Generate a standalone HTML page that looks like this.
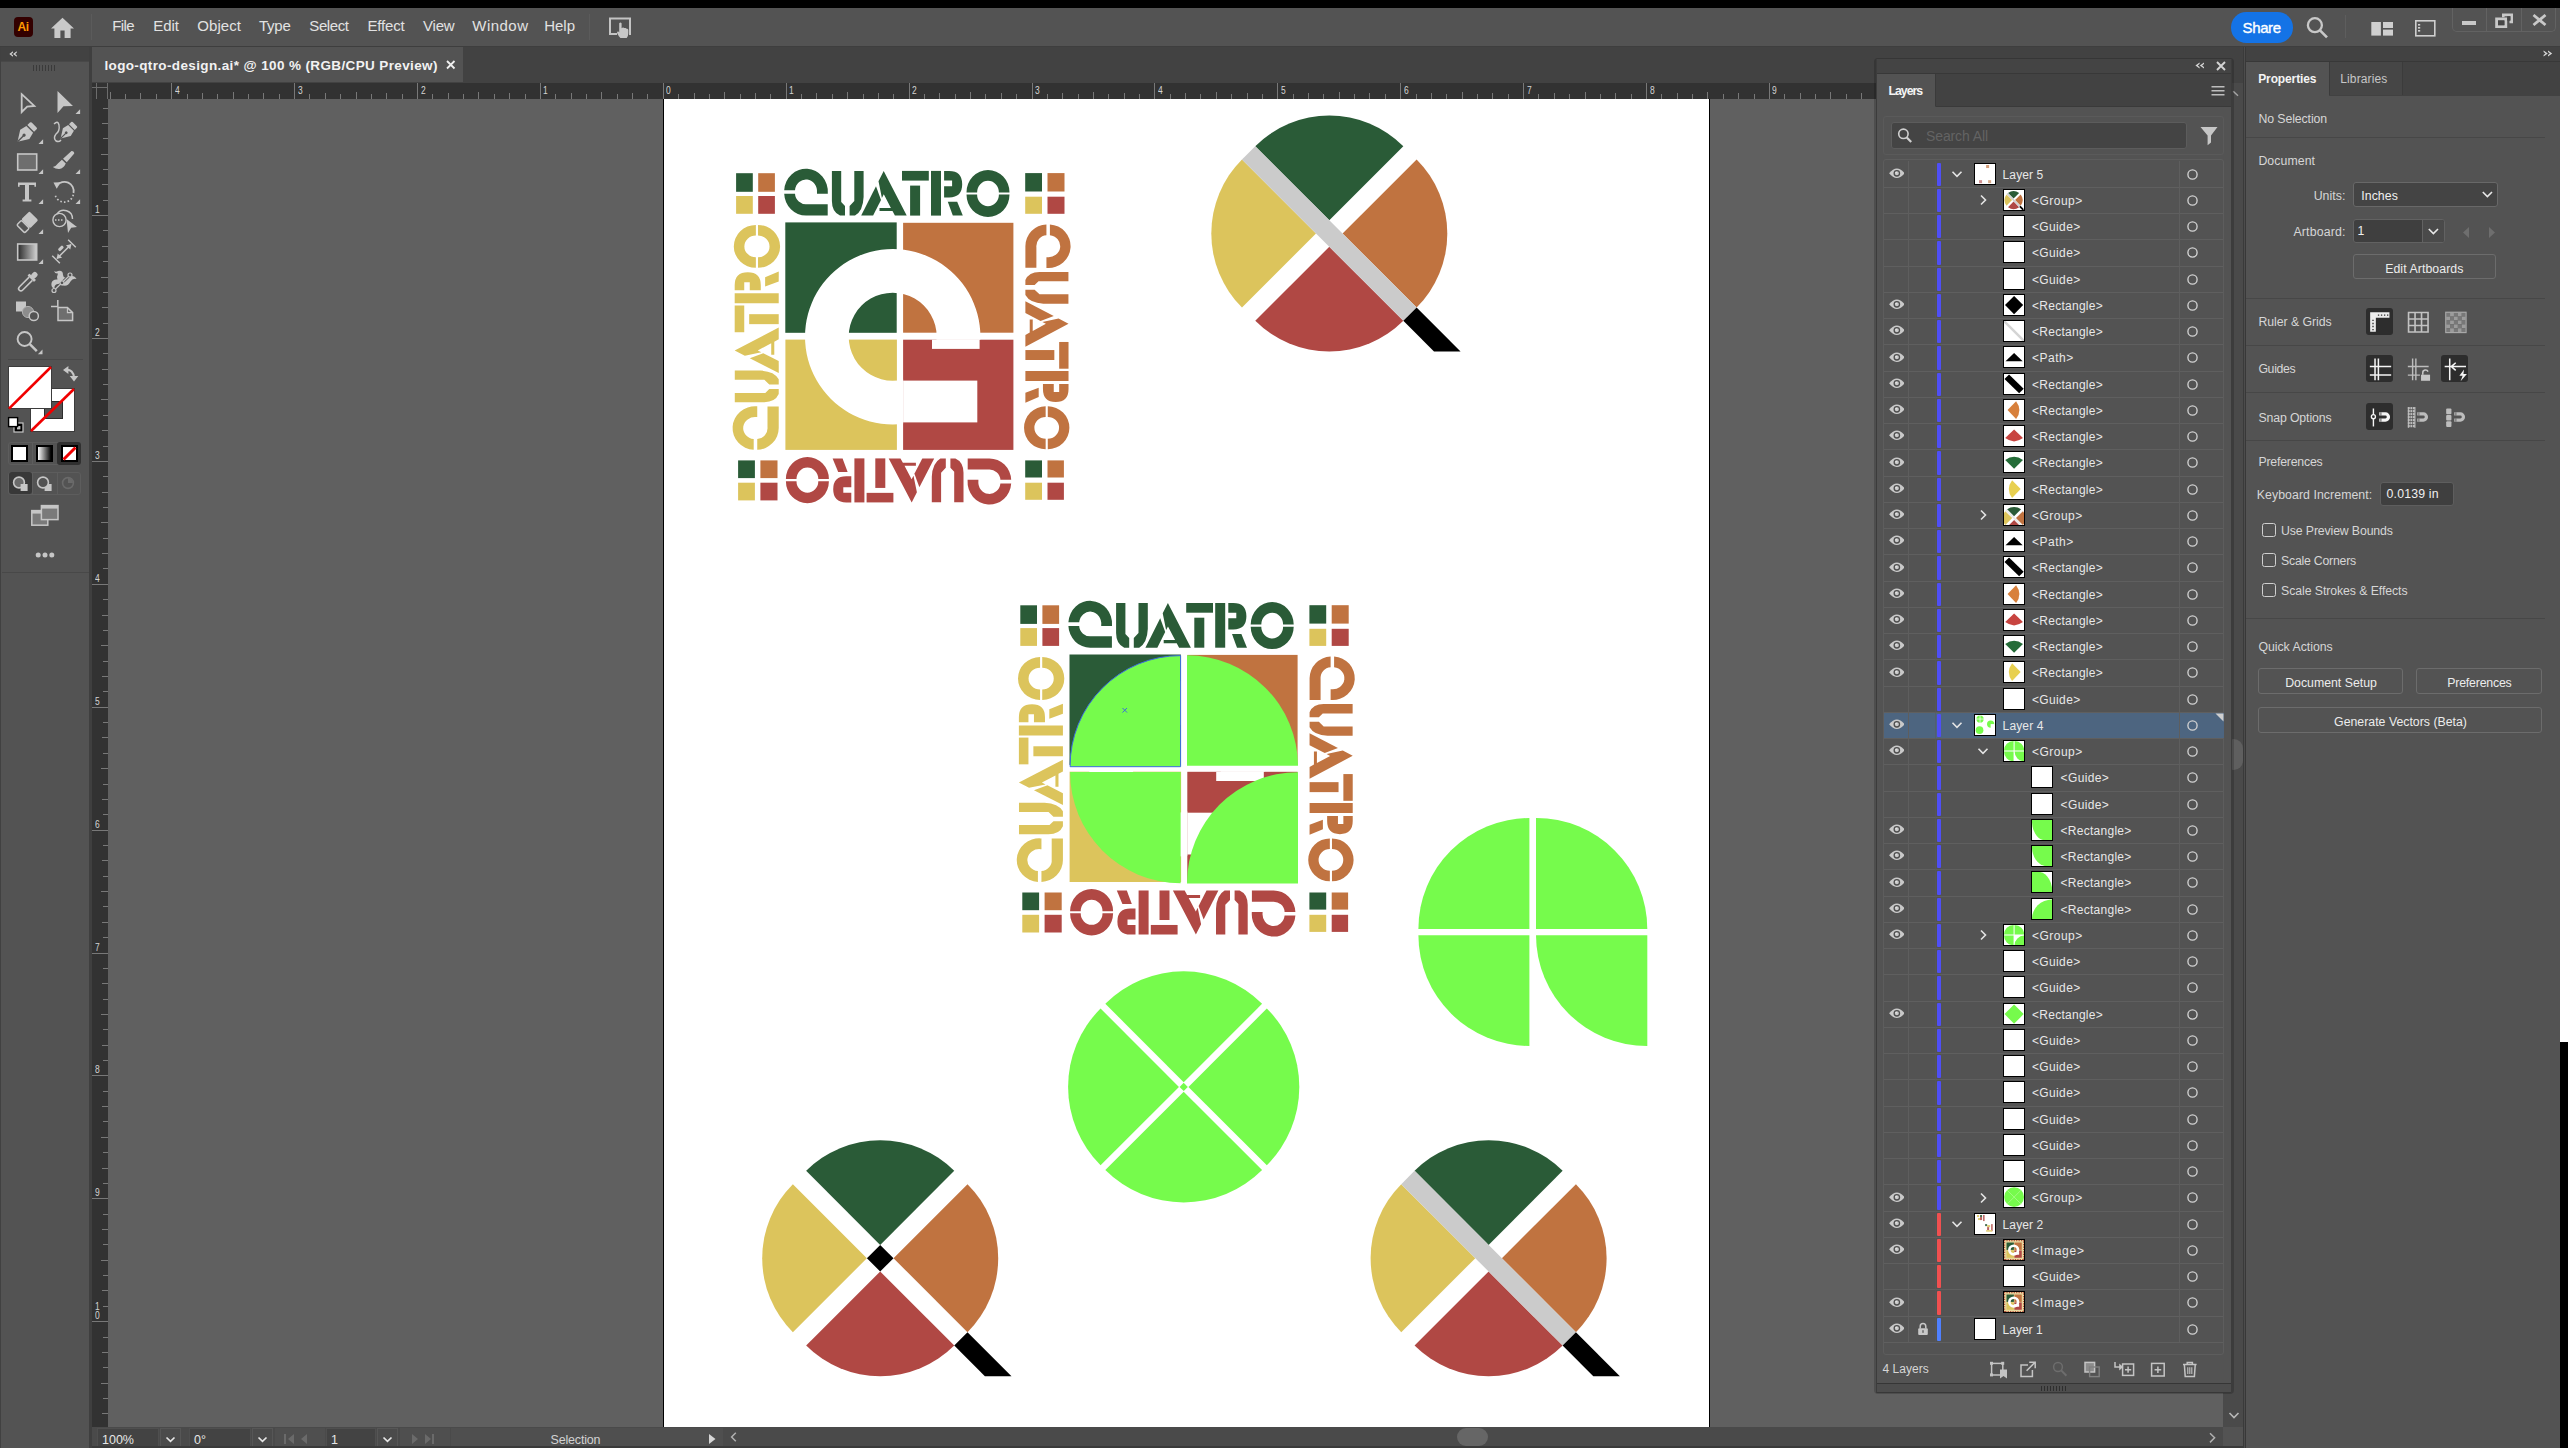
<!DOCTYPE html><html><head><meta charset="utf-8"><title>Illustrator</title><style>html,body{margin:0;padding:0}body{width:2568px;height:1448px;position:relative;overflow:hidden;background:#535353;font-family:"Liberation Sans",sans-serif}
body>div,body>span,body>svg,.a{position:absolute}span{white-space:nowrap;line-height:1.2}
.p{position:absolute}</style></head><body><div style="left:0px;top:0px;width:2560px;height:8px;background:#000;"></div>
<div style="left:2560px;top:0px;width:8px;height:1042px;background:#fff;"></div>
<div style="left:2560px;top:1042px;width:8px;height:406px;background:#000;"></div>
<div style="left:0px;top:8px;width:2560px;height:38px;background:#535353;"></div>
<div style="left:0px;top:46px;width:2560px;height:1px;background:#3e3e3e;"></div>
<div style="left:0px;top:47px;width:89px;height:1401px;background:#535353;"></div>
<div style="left:0px;top:47px;width:89px;height:14px;background:#424242;"></div>
<div style="left:0px;top:61px;width:89px;height:1px;background:#484848;"></div>
<div style="left:89px;top:47px;width:3px;height:1401px;background:#3f3f3f;"></div>
<div style="left:0px;top:47px;width:1px;height:1401px;background:#414141;"></div>
<div style="left:92px;top:47px;width:2151px;height:36px;background:#424242;"></div>
<div style="left:92px;top:47px;width:371px;height:35px;background:#535353;"></div>
<div style="left:108px;top:99px;width:2115px;height:1328px;background:#606060;"></div>
<div style="left:92px;top:83px;width:1784px;height:16px;background:#323232;"></div>
<div style="left:92px;top:83px;width:16px;height:1344px;background:#323232;"></div>
<div style="left:664px;top:99px;width:1045px;height:1328px;background:#fff;"></div>
<div style="left:1709px;top:99px;width:1px;height:1328px;background:#000;"></div>
<div style="left:663px;top:99px;width:1px;height:1328px;background:#000;"></div>
<div style="left:92px;top:1427px;width:2151px;height:19px;background:#4a4a4a;"></div>
<div style="left:92px;top:1446px;width:2151px;height:2px;background:#3a3a3a;"></div>
<div style="left:2223px;top:83px;width:20px;height:1344px;background:#4a4a4a;"></div>
<div style="left:2223px;top:1427px;width:20px;height:19px;background:#535353;"></div>
<div style="left:2243px;top:47px;width:1px;height:1401px;background:#3a3a3a;"></div>
<div style="left:2244px;top:47px;width:1px;height:1401px;background:#4c4c4c;"></div>
<div style="left:2245px;top:47px;width:1px;height:1401px;background:#383838;"></div>
<div style="left:2246px;top:47px;width:314px;height:1401px;background:#535353;"></div>
<div style="left:2246px;top:47px;width:314px;height:14px;background:#424242;"></div>
<div style="left:2246px;top:61px;width:314px;height:1px;background:#383838;"></div>
<svg style="left:0;top:0" width="2568" height="1448" viewBox="0 0 2568 1448"><defs><symbol id="qt" overflow="visible"><path d="M0.2,20.0 A21.8,22.8 0 0 1 43.8,22.8 L43.8,23.6 L33.0,23.6 L33.0,22.8 A11.0,12.0 0 0 0 11.0,20.0 Z"/><path d="M0.2,23.6 A21.8,22.8 0 0 0 22.0,45.4 L43.7,45.4 L43.7,34.0 L23.0,34.0 A11.0,11.0 0 0 1 11.0,23.6 Z"/><path d="M47.9,0.8 L57.2,0.8 L57.2,31.8 L61.0,35.8 L61.0,45.4 L56.0,45.4 Q47.9,41.8 47.9,30.8 Z"/><path d="M70.3,0.8 L79.6,0.8 L79.6,26.8 Q79.0,40.8 71.0,45.4 L65.6,45.4 L65.6,35.8 L70.3,30.8 Z"/><polygon points="92.0,16.0 97.0,29.7 89.1,45.4 77.2,45.4"/><polygon points="99.7,0.7 122.7,45.4 110.9,45.4 108.5,40.9 95.5,40.9 95.5,37.8 106.9,37.8 99.8,24.1 97.9,27.8 94.5,11.0"/><polygon points="118.0,0.7 144.8,0.7 144.8,10.4 118.0,10.4"/><polygon points="126.1,15.4 136.1,15.4 136.1,45.4 126.1,45.4"/><polygon points="147.0,0.7 157.0,0.7 157.0,45.4 147.0,45.4"/><path d="M160.1,0.7 L165.1,0.7 Q178.2,0.7 178.2,14.0 Q178.2,27.2 165.1,27.2 L160.1,27.2 L160.1,16.0 L168.1,16.0 L168.1,10.4 L160.1,10.4 Z"/><polygon points="163.8,31.6 173.2,31.6 178.8,45.4 168.8,45.4"/><path d="M182.5,22.2 A21.5,22.4 0 0 1 225.5,22.2 L214.9,22.2 A10.9,11.7 0 0 0 193.1,22.2 Z"/><path d="M182.5,24.4 A21.5,22.4 0 0 0 225.5,24.4 L214.9,24.4 A10.9,11.7 0 0 1 193.1,24.4 Z"/></symbol><clipPath id="sqclip"><rect x="785.3" y="222.4" width="111.4" height="110.4"/><rect x="903.1" y="222.8" width="110.3" height="109.9"/><rect x="785.4" y="339.6" width="111.5" height="110.3"/><rect x="903.1" y="339.7" width="110.3" height="110.2"/></clipPath><clipPath id="notred"><path d="M700,100 H1100 V339.7 H903.1 V520 H700 Z"/></clipPath><symbol id="logo" overflow="visible"><rect x="736.1" y="173.2" width="16.7" height="18.6" fill="#2a5b37"/><rect x="758.2" y="173.2" width="16.7" height="18.6" fill="#c07340"/><rect x="736.1" y="196.0" width="16.7" height="17.8" fill="#dcc45c"/><rect x="758.2" y="196.0" width="16.7" height="17.8" fill="#b04844"/><rect x="1025.2" y="173.1" width="16.8" height="18.4" fill="#2a5b37"/><rect x="1047.5" y="173.1" width="17.0" height="18.4" fill="#c07340"/><rect x="1025.2" y="196.7" width="16.8" height="17.1" fill="#dcc45c"/><rect x="1047.5" y="196.7" width="17.0" height="17.1" fill="#b04844"/><rect x="738.1" y="460.4" width="16.8" height="17.7" fill="#2a5b37"/><rect x="760.4" y="460.4" width="17.1" height="17.7" fill="#c07340"/><rect x="738.1" y="482.7" width="16.8" height="17.7" fill="#dcc45c"/><rect x="760.4" y="482.7" width="17.1" height="17.7" fill="#b04844"/><rect x="1025.2" y="460.4" width="16.8" height="17.1" fill="#2a5b37"/><rect x="1047.5" y="460.4" width="16.4" height="17.1" fill="#c07340"/><rect x="1025.2" y="482.7" width="16.8" height="17.1" fill="#dcc45c"/><rect x="1047.5" y="482.7" width="16.4" height="17.1" fill="#b04844"/><rect x="785.3" y="222.4" width="111.4" height="110.4" fill="#2a5b37"/><rect x="903.1" y="222.8" width="110.3" height="109.9" fill="#c07340"/><rect x="785.4" y="339.6" width="111.5" height="110.3" fill="#dcc45c"/><rect x="903.1" y="339.7" width="110.3" height="110.2" fill="#b04844"/><path fill="#fff" fill-rule="evenodd" d="M892.7,249 a87.7,87.7 0 1 0 0.01,0 Z M892.7,292.7 a44,44 0 1 1 -0.01,0 Z" clip-path="url(#notred)"/><rect x="932.0" y="339.7" width="47.6" height="9.2" fill="#fff"/><rect x="903.1" y="380.6" width="74.2" height="41.8" fill="#fff"/><use href="#qt" fill="#2a5b37" transform="translate(784,170.2)"/><use href="#qt" fill="#c07340" transform="translate(1069.2,224.2) rotate(90) scale(0.998,0.965)"/><use href="#qt" fill="#b04844" transform="translate(1011.4,503.1) rotate(180) scale(1,0.985)"/><use href="#qt" fill="#dcc45c" transform="translate(734.0,450.0) rotate(270) scale(0.998,0.985)"/></symbol><clipPath id="cv"><rect x="108" y="99" width="2124" height="1328"/></clipPath></defs><g clip-path="url(#cv)"><use href="#logo"/><use href="#logo" transform="translate(284.2,432.1)"/><path fill="#76fb4c" d="M1180.6,766.7 L1070.1,766.7 A110.5,110.5 0 0 1 1180.6,655.6 Z" stroke="#3c6be0" stroke-width="1"/><path fill="#76fb4c" d="M1187,765.8 L1187,655.3 A111,111 0 0 1 1298,765.8 Z"/><path fill="#76fb4c" d="M1180.6,771.9 L1180.6,883.3 A111,111 0 0 1 1070.1,771.9 Z"/><path fill="#76fb4c" d="M1298,883.5 L1187,883.5 A111,111 0 0 1 1298,772.2 Z"/><path d="M1122.5,708 l4.5,4.5 m0,-4.5 l-4.5,4.5" stroke="#3c6be0" stroke-width="1" fill="none"/><path fill="#76fb4c" d="M1529.4,929 L1418.4,929 A111,111 0 0 1 1529.4,818 Z"/><path fill="#76fb4c" d="M1536,929 L1536,818 A111,111 0 0 1 1647.3,929 Z"/><path fill="#76fb4c" d="M1529.4,935.3 L1529.4,1046 A111,111 0 0 1 1418.4,935.3 Z"/><path fill="#76fb4c" d="M1647.3,935.3 L1647.3,1046 A111,111 0 0 1 1536,935.3 Z"/><g transform="translate(1183.7,1086.9)"><path transform="rotate(0)" fill="#76fb4c" d="M0,-4.74 L-78.39,-83.13 A110.86,110.86 0 0 1 78.39,-83.13 Z"/><path transform="rotate(90)" fill="#76fb4c" d="M0,-4.74 L-78.39,-83.13 A110.86,110.86 0 0 1 78.39,-83.13 Z"/><path transform="rotate(180)" fill="#76fb4c" d="M0,-4.74 L-78.39,-83.13 A110.86,110.86 0 0 1 78.39,-83.13 Z"/><path transform="rotate(270)" fill="#76fb4c" d="M0,-4.74 L-78.39,-83.13 A110.86,110.86 0 0 1 78.39,-83.13 Z"/><rect transform="rotate(45)" x="-2.9" y="-2.9" width="5.8" height="5.8" fill="#76fb4c"/></g><g transform="translate(1329.3,233.5)"><path transform="rotate(0)" fill="#2a5b37" d="M0,-13.29 L-74.04,-87.33 A104.71,104.71 0 0 1 74.04,-87.33 Z"/><path transform="rotate(90)" fill="#c07340" d="M0,-13.29 L-74.04,-87.33 A104.71,104.71 0 0 1 74.04,-87.33 Z"/><path transform="rotate(180)" fill="#b04844" d="M0,-13.29 L-74.04,-87.33 A104.71,104.71 0 0 1 74.04,-87.33 Z"/><path transform="rotate(270)" fill="#dcc45c" d="M0,-13.29 L-74.04,-87.33 A104.71,104.71 0 0 1 74.04,-87.33 Z"/><rect transform="rotate(45)" x="-114.11" y="-9.4" width="228.21" height="18.8" fill="#cbcbcb"/><polygon fill="#000" points="87.33,74.04 131.29,118.00 104.71,118.00 74.04,87.33"/></g><g transform="translate(880.2,1258.2)"><path transform="rotate(0)" fill="#2a5b37" d="M0,-13.29 L-74.04,-87.33 A104.71,104.71 0 0 1 74.04,-87.33 Z"/><path transform="rotate(90)" fill="#c07340" d="M0,-13.29 L-74.04,-87.33 A104.71,104.71 0 0 1 74.04,-87.33 Z"/><path transform="rotate(180)" fill="#b04844" d="M0,-13.29 L-74.04,-87.33 A104.71,104.71 0 0 1 74.04,-87.33 Z"/><path transform="rotate(270)" fill="#dcc45c" d="M0,-13.29 L-74.04,-87.33 A104.71,104.71 0 0 1 74.04,-87.33 Z"/><rect transform="rotate(45)" x="-9.4" y="-9.4" width="18.8" height="18.8" fill="#000"/><polygon fill="#000" points="87.33,74.04 131.29,118.00 104.71,118.00 74.04,87.33"/></g><g transform="translate(1488.6,1258.2)"><path transform="rotate(0)" fill="#2a5b37" d="M0,-13.29 L-74.04,-87.33 A104.71,104.71 0 0 1 74.04,-87.33 Z"/><path transform="rotate(90)" fill="#c07340" d="M0,-13.29 L-74.04,-87.33 A104.71,104.71 0 0 1 74.04,-87.33 Z"/><path transform="rotate(180)" fill="#b04844" d="M0,-13.29 L-74.04,-87.33 A104.71,104.71 0 0 1 74.04,-87.33 Z"/><path transform="rotate(270)" fill="#dcc45c" d="M0,-13.29 L-74.04,-87.33 A104.71,104.71 0 0 1 74.04,-87.33 Z"/><rect transform="rotate(45)" x="-114.11" y="-9.4" width="228.21" height="18.8" fill="#cbcbcb"/><polygon fill="#000" points="87.33,74.04 131.29,118.00 104.71,118.00 74.04,87.33"/></g></g></svg>
<svg style="left:0;top:0" width="2568" height="1448" viewBox="0 0 2568 1448" shape-rendering="crispEdges"><path d="M96.5,83 V99 M92,87.5 H108 M107.5,83 V99" stroke="#6c6c6c" stroke-width="1" fill="none"/><rect x="110" y="92.0" width="1" height="7.0" fill="#787878"/><rect x="125" y="94.0" width="1" height="5.0" fill="#787878"/><rect x="140" y="93.0" width="1" height="6.0" fill="#787878"/><rect x="156" y="94.0" width="1" height="5.0" fill="#787878"/><rect x="171" y="83.0" width="1" height="16.0" fill="#787878"/><rect x="187" y="94.0" width="1" height="5.0" fill="#787878"/><rect x="202" y="93.0" width="1" height="6.0" fill="#787878"/><rect x="217" y="94.0" width="1" height="5.0" fill="#787878"/><rect x="233" y="92.0" width="1" height="7.0" fill="#787878"/><rect x="248" y="94.0" width="1" height="5.0" fill="#787878"/><rect x="263" y="93.0" width="1" height="6.0" fill="#787878"/><rect x="279" y="94.0" width="1" height="5.0" fill="#787878"/><rect x="294" y="83.0" width="1" height="16.0" fill="#787878"/><rect x="309" y="94.0" width="1" height="5.0" fill="#787878"/><rect x="325" y="93.0" width="1" height="6.0" fill="#787878"/><rect x="340" y="94.0" width="1" height="5.0" fill="#787878"/><rect x="356" y="92.0" width="1" height="7.0" fill="#787878"/><rect x="371" y="94.0" width="1" height="5.0" fill="#787878"/><rect x="386" y="93.0" width="1" height="6.0" fill="#787878"/><rect x="402" y="94.0" width="1" height="5.0" fill="#787878"/><rect x="417" y="83.0" width="1" height="16.0" fill="#787878"/><rect x="432" y="94.0" width="1" height="5.0" fill="#787878"/><rect x="448" y="93.0" width="1" height="6.0" fill="#787878"/><rect x="463" y="94.0" width="1" height="5.0" fill="#787878"/><rect x="478" y="92.0" width="1" height="7.0" fill="#787878"/><rect x="494" y="94.0" width="1" height="5.0" fill="#787878"/><rect x="509" y="93.0" width="1" height="6.0" fill="#787878"/><rect x="525" y="94.0" width="1" height="5.0" fill="#787878"/><rect x="540" y="83.0" width="1" height="16.0" fill="#787878"/><rect x="555" y="94.0" width="1" height="5.0" fill="#787878"/><rect x="571" y="93.0" width="1" height="6.0" fill="#787878"/><rect x="586" y="94.0" width="1" height="5.0" fill="#787878"/><rect x="601" y="92.0" width="1" height="7.0" fill="#787878"/><rect x="617" y="94.0" width="1" height="5.0" fill="#787878"/><rect x="632" y="93.0" width="1" height="6.0" fill="#787878"/><rect x="647" y="94.0" width="1" height="5.0" fill="#787878"/><rect x="663" y="83.0" width="1" height="16.0" fill="#787878"/><rect x="678" y="94.0" width="1" height="5.0" fill="#787878"/><rect x="694" y="93.0" width="1" height="6.0" fill="#787878"/><rect x="709" y="94.0" width="1" height="5.0" fill="#787878"/><rect x="724" y="92.0" width="1" height="7.0" fill="#787878"/><rect x="740" y="94.0" width="1" height="5.0" fill="#787878"/><rect x="755" y="93.0" width="1" height="6.0" fill="#787878"/><rect x="770" y="94.0" width="1" height="5.0" fill="#787878"/><rect x="786" y="83.0" width="1" height="16.0" fill="#787878"/><rect x="801" y="94.0" width="1" height="5.0" fill="#787878"/><rect x="816" y="93.0" width="1" height="6.0" fill="#787878"/><rect x="832" y="94.0" width="1" height="5.0" fill="#787878"/><rect x="847" y="92.0" width="1" height="7.0" fill="#787878"/><rect x="863" y="94.0" width="1" height="5.0" fill="#787878"/><rect x="878" y="93.0" width="1" height="6.0" fill="#787878"/><rect x="893" y="94.0" width="1" height="5.0" fill="#787878"/><rect x="909" y="83.0" width="1" height="16.0" fill="#787878"/><rect x="924" y="94.0" width="1" height="5.0" fill="#787878"/><rect x="939" y="93.0" width="1" height="6.0" fill="#787878"/><rect x="955" y="94.0" width="1" height="5.0" fill="#787878"/><rect x="970" y="92.0" width="1" height="7.0" fill="#787878"/><rect x="985" y="94.0" width="1" height="5.0" fill="#787878"/><rect x="1001" y="93.0" width="1" height="6.0" fill="#787878"/><rect x="1016" y="94.0" width="1" height="5.0" fill="#787878"/><rect x="1032" y="83.0" width="1" height="16.0" fill="#787878"/><rect x="1047" y="94.0" width="1" height="5.0" fill="#787878"/><rect x="1062" y="93.0" width="1" height="6.0" fill="#787878"/><rect x="1078" y="94.0" width="1" height="5.0" fill="#787878"/><rect x="1093" y="92.0" width="1" height="7.0" fill="#787878"/><rect x="1108" y="94.0" width="1" height="5.0" fill="#787878"/><rect x="1124" y="93.0" width="1" height="6.0" fill="#787878"/><rect x="1139" y="94.0" width="1" height="5.0" fill="#787878"/><rect x="1154" y="83.0" width="1" height="16.0" fill="#787878"/><rect x="1170" y="94.0" width="1" height="5.0" fill="#787878"/><rect x="1185" y="93.0" width="1" height="6.0" fill="#787878"/><rect x="1200" y="94.0" width="1" height="5.0" fill="#787878"/><rect x="1216" y="92.0" width="1" height="7.0" fill="#787878"/><rect x="1231" y="94.0" width="1" height="5.0" fill="#787878"/><rect x="1247" y="93.0" width="1" height="6.0" fill="#787878"/><rect x="1262" y="94.0" width="1" height="5.0" fill="#787878"/><rect x="1277" y="83.0" width="1" height="16.0" fill="#787878"/><rect x="1293" y="94.0" width="1" height="5.0" fill="#787878"/><rect x="1308" y="93.0" width="1" height="6.0" fill="#787878"/><rect x="1323" y="94.0" width="1" height="5.0" fill="#787878"/><rect x="1339" y="92.0" width="1" height="7.0" fill="#787878"/><rect x="1354" y="94.0" width="1" height="5.0" fill="#787878"/><rect x="1369" y="93.0" width="1" height="6.0" fill="#787878"/><rect x="1385" y="94.0" width="1" height="5.0" fill="#787878"/><rect x="1400" y="83.0" width="1" height="16.0" fill="#787878"/><rect x="1416" y="94.0" width="1" height="5.0" fill="#787878"/><rect x="1431" y="93.0" width="1" height="6.0" fill="#787878"/><rect x="1446" y="94.0" width="1" height="5.0" fill="#787878"/><rect x="1462" y="92.0" width="1" height="7.0" fill="#787878"/><rect x="1477" y="94.0" width="1" height="5.0" fill="#787878"/><rect x="1492" y="93.0" width="1" height="6.0" fill="#787878"/><rect x="1508" y="94.0" width="1" height="5.0" fill="#787878"/><rect x="1523" y="83.0" width="1" height="16.0" fill="#787878"/><rect x="1538" y="94.0" width="1" height="5.0" fill="#787878"/><rect x="1554" y="93.0" width="1" height="6.0" fill="#787878"/><rect x="1569" y="94.0" width="1" height="5.0" fill="#787878"/><rect x="1585" y="92.0" width="1" height="7.0" fill="#787878"/><rect x="1600" y="94.0" width="1" height="5.0" fill="#787878"/><rect x="1615" y="93.0" width="1" height="6.0" fill="#787878"/><rect x="1631" y="94.0" width="1" height="5.0" fill="#787878"/><rect x="1646" y="83.0" width="1" height="16.0" fill="#787878"/><rect x="1661" y="94.0" width="1" height="5.0" fill="#787878"/><rect x="1677" y="93.0" width="1" height="6.0" fill="#787878"/><rect x="1692" y="94.0" width="1" height="5.0" fill="#787878"/><rect x="1707" y="92.0" width="1" height="7.0" fill="#787878"/><rect x="1723" y="94.0" width="1" height="5.0" fill="#787878"/><rect x="1738" y="93.0" width="1" height="6.0" fill="#787878"/><rect x="1754" y="94.0" width="1" height="5.0" fill="#787878"/><rect x="1769" y="83.0" width="1" height="16.0" fill="#787878"/><rect x="1784" y="94.0" width="1" height="5.0" fill="#787878"/><rect x="1800" y="93.0" width="1" height="6.0" fill="#787878"/><rect x="1815" y="94.0" width="1" height="5.0" fill="#787878"/><rect x="1830" y="92.0" width="1" height="7.0" fill="#787878"/><rect x="1846" y="94.0" width="1" height="5.0" fill="#787878"/><rect x="1861" y="93.0" width="1" height="6.0" fill="#787878"/><rect x="103.0" y="108" width="5.0" height="1" fill="#787878"/><rect x="102.0" y="123" width="6.0" height="1" fill="#787878"/><rect x="103.0" y="138" width="5.0" height="1" fill="#787878"/><rect x="101.0" y="154" width="7.0" height="1" fill="#787878"/><rect x="103.0" y="169" width="5.0" height="1" fill="#787878"/><rect x="102.0" y="184" width="6.0" height="1" fill="#787878"/><rect x="103.0" y="200" width="5.0" height="1" fill="#787878"/><rect x="92.0" y="215" width="16.0" height="1" fill="#787878"/><rect x="103.0" y="230" width="5.0" height="1" fill="#787878"/><rect x="102.0" y="246" width="6.0" height="1" fill="#787878"/><rect x="103.0" y="261" width="5.0" height="1" fill="#787878"/><rect x="101.0" y="277" width="7.0" height="1" fill="#787878"/><rect x="103.0" y="292" width="5.0" height="1" fill="#787878"/><rect x="102.0" y="307" width="6.0" height="1" fill="#787878"/><rect x="103.0" y="323" width="5.0" height="1" fill="#787878"/><rect x="92.0" y="338" width="16.0" height="1" fill="#787878"/><rect x="103.0" y="353" width="5.0" height="1" fill="#787878"/><rect x="102.0" y="369" width="6.0" height="1" fill="#787878"/><rect x="103.0" y="384" width="5.0" height="1" fill="#787878"/><rect x="101.0" y="399" width="7.0" height="1" fill="#787878"/><rect x="103.0" y="415" width="5.0" height="1" fill="#787878"/><rect x="102.0" y="430" width="6.0" height="1" fill="#787878"/><rect x="103.0" y="446" width="5.0" height="1" fill="#787878"/><rect x="92.0" y="461" width="16.0" height="1" fill="#787878"/><rect x="103.0" y="476" width="5.0" height="1" fill="#787878"/><rect x="102.0" y="492" width="6.0" height="1" fill="#787878"/><rect x="103.0" y="507" width="5.0" height="1" fill="#787878"/><rect x="101.0" y="522" width="7.0" height="1" fill="#787878"/><rect x="103.0" y="538" width="5.0" height="1" fill="#787878"/><rect x="102.0" y="553" width="6.0" height="1" fill="#787878"/><rect x="103.0" y="568" width="5.0" height="1" fill="#787878"/><rect x="92.0" y="584" width="16.0" height="1" fill="#787878"/><rect x="103.0" y="599" width="5.0" height="1" fill="#787878"/><rect x="102.0" y="615" width="6.0" height="1" fill="#787878"/><rect x="103.0" y="630" width="5.0" height="1" fill="#787878"/><rect x="101.0" y="645" width="7.0" height="1" fill="#787878"/><rect x="103.0" y="661" width="5.0" height="1" fill="#787878"/><rect x="102.0" y="676" width="6.0" height="1" fill="#787878"/><rect x="103.0" y="691" width="5.0" height="1" fill="#787878"/><rect x="92.0" y="707" width="16.0" height="1" fill="#787878"/><rect x="103.0" y="722" width="5.0" height="1" fill="#787878"/><rect x="102.0" y="737" width="6.0" height="1" fill="#787878"/><rect x="103.0" y="753" width="5.0" height="1" fill="#787878"/><rect x="101.0" y="768" width="7.0" height="1" fill="#787878"/><rect x="103.0" y="784" width="5.0" height="1" fill="#787878"/><rect x="102.0" y="799" width="6.0" height="1" fill="#787878"/><rect x="103.0" y="814" width="5.0" height="1" fill="#787878"/><rect x="92.0" y="830" width="16.0" height="1" fill="#787878"/><rect x="103.0" y="845" width="5.0" height="1" fill="#787878"/><rect x="102.0" y="860" width="6.0" height="1" fill="#787878"/><rect x="103.0" y="876" width="5.0" height="1" fill="#787878"/><rect x="101.0" y="891" width="7.0" height="1" fill="#787878"/><rect x="103.0" y="906" width="5.0" height="1" fill="#787878"/><rect x="102.0" y="922" width="6.0" height="1" fill="#787878"/><rect x="103.0" y="937" width="5.0" height="1" fill="#787878"/><rect x="92.0" y="953" width="16.0" height="1" fill="#787878"/><rect x="103.0" y="968" width="5.0" height="1" fill="#787878"/><rect x="102.0" y="983" width="6.0" height="1" fill="#787878"/><rect x="103.0" y="999" width="5.0" height="1" fill="#787878"/><rect x="101.0" y="1014" width="7.0" height="1" fill="#787878"/><rect x="103.0" y="1029" width="5.0" height="1" fill="#787878"/><rect x="102.0" y="1045" width="6.0" height="1" fill="#787878"/><rect x="103.0" y="1060" width="5.0" height="1" fill="#787878"/><rect x="92.0" y="1075" width="16.0" height="1" fill="#787878"/><rect x="103.0" y="1091" width="5.0" height="1" fill="#787878"/><rect x="102.0" y="1106" width="6.0" height="1" fill="#787878"/><rect x="103.0" y="1121" width="5.0" height="1" fill="#787878"/><rect x="101.0" y="1137" width="7.0" height="1" fill="#787878"/><rect x="103.0" y="1152" width="5.0" height="1" fill="#787878"/><rect x="102.0" y="1168" width="6.0" height="1" fill="#787878"/><rect x="103.0" y="1183" width="5.0" height="1" fill="#787878"/><rect x="92.0" y="1198" width="16.0" height="1" fill="#787878"/><rect x="103.0" y="1214" width="5.0" height="1" fill="#787878"/><rect x="102.0" y="1229" width="6.0" height="1" fill="#787878"/><rect x="103.0" y="1244" width="5.0" height="1" fill="#787878"/><rect x="101.0" y="1260" width="7.0" height="1" fill="#787878"/><rect x="103.0" y="1275" width="5.0" height="1" fill="#787878"/><rect x="102.0" y="1290" width="6.0" height="1" fill="#787878"/><rect x="103.0" y="1306" width="5.0" height="1" fill="#787878"/><rect x="92.0" y="1321" width="16.0" height="1" fill="#787878"/><rect x="103.0" y="1337" width="5.0" height="1" fill="#787878"/><rect x="102.0" y="1352" width="6.0" height="1" fill="#787878"/><rect x="103.0" y="1367" width="5.0" height="1" fill="#787878"/><rect x="101.0" y="1383" width="7.0" height="1" fill="#787878"/><rect x="103.0" y="1398" width="5.0" height="1" fill="#787878"/><rect x="102.0" y="1413" width="6.0" height="1" fill="#787878"/></svg><span style="left:174.7px;top:85.2px;font-size:10.6px;color:#d4d4d4;line-height:11px;transform:scaleX(.8);transform-origin:0 0">4</span><span style="left:297.6px;top:85.2px;font-size:10.6px;color:#d4d4d4;line-height:11px;transform:scaleX(.8);transform-origin:0 0">3</span><span style="left:420.5px;top:85.2px;font-size:10.6px;color:#d4d4d4;line-height:11px;transform:scaleX(.8);transform-origin:0 0">2</span><span style="left:543.4px;top:85.2px;font-size:10.6px;color:#d4d4d4;line-height:11px;transform:scaleX(.8);transform-origin:0 0">1</span><span style="left:666.3px;top:85.2px;font-size:10.6px;color:#d4d4d4;line-height:11px;transform:scaleX(.8);transform-origin:0 0">0</span><span style="left:789.2px;top:85.2px;font-size:10.6px;color:#d4d4d4;line-height:11px;transform:scaleX(.8);transform-origin:0 0">1</span><span style="left:912.1px;top:85.2px;font-size:10.6px;color:#d4d4d4;line-height:11px;transform:scaleX(.8);transform-origin:0 0">2</span><span style="left:1035.0px;top:85.2px;font-size:10.6px;color:#d4d4d4;line-height:11px;transform:scaleX(.8);transform-origin:0 0">3</span><span style="left:1157.9px;top:85.2px;font-size:10.6px;color:#d4d4d4;line-height:11px;transform:scaleX(.8);transform-origin:0 0">4</span><span style="left:1280.8px;top:85.2px;font-size:10.6px;color:#d4d4d4;line-height:11px;transform:scaleX(.8);transform-origin:0 0">5</span><span style="left:1403.7px;top:85.2px;font-size:10.6px;color:#d4d4d4;line-height:11px;transform:scaleX(.8);transform-origin:0 0">6</span><span style="left:1526.6px;top:85.2px;font-size:10.6px;color:#d4d4d4;line-height:11px;transform:scaleX(.8);transform-origin:0 0">7</span><span style="left:1649.5px;top:85.2px;font-size:10.6px;color:#d4d4d4;line-height:11px;transform:scaleX(.8);transform-origin:0 0">8</span><span style="left:1772.4px;top:85.2px;font-size:10.6px;color:#d4d4d4;line-height:11px;transform:scaleX(.8);transform-origin:0 0">9</span><span style="left:95px;top:204.1px;font-size:10.6px;color:#d4d4d4;line-height:11px;transform:scaleX(.8);transform-origin:0 0">1</span><span style="left:95px;top:327.0px;font-size:10.6px;color:#d4d4d4;line-height:11px;transform:scaleX(.8);transform-origin:0 0">2</span><span style="left:95px;top:449.9px;font-size:10.6px;color:#d4d4d4;line-height:11px;transform:scaleX(.8);transform-origin:0 0">3</span><span style="left:95px;top:572.8px;font-size:10.6px;color:#d4d4d4;line-height:11px;transform:scaleX(.8);transform-origin:0 0">4</span><span style="left:95px;top:695.7px;font-size:10.6px;color:#d4d4d4;line-height:11px;transform:scaleX(.8);transform-origin:0 0">5</span><span style="left:95px;top:818.6px;font-size:10.6px;color:#d4d4d4;line-height:11px;transform:scaleX(.8);transform-origin:0 0">6</span><span style="left:95px;top:941.5px;font-size:10.6px;color:#d4d4d4;line-height:11px;transform:scaleX(.8);transform-origin:0 0">7</span><span style="left:95px;top:1064.4px;font-size:10.6px;color:#d4d4d4;line-height:11px;transform:scaleX(.8);transform-origin:0 0">8</span><span style="left:95px;top:1187.3px;font-size:10.6px;color:#d4d4d4;line-height:11px;transform:scaleX(.8);transform-origin:0 0">9</span><span style="left:95px;top:1300.7px;font-size:10.6px;color:#d4d4d4;line-height:11px;transform:scaleX(.8);transform-origin:0 0">1</span><span style="left:95px;top:1310.2px;font-size:10.6px;color:#d4d4d4;line-height:11px;transform:scaleX(.8);transform-origin:0 0">0</span>
<div style="left:13.5px;top:17px;width:19.5px;height:19.5px;background:#330000;border-radius:4px"></div>
<span style="left:17.60px;top:21.04px;font-size:12px;line-height:12px;color:#ff9a00;font-weight:bold;letter-spacing:-0.600px;">Ai</span>
<svg style="left:50px;top:16px;" width="26" height="24" viewBox="0 0 26 24"><path fill="#c9c9c9" d="M12.5,1.8 L24,12.6 H20.6 V22 H14.6 V14.6 H10.4 V22 H4.4 V12.6 H1 Z"/></svg>
<div style="left:91px;top:14px;width:1px;height:26px;background:#5b5b5b;"></div>
<span style="left:112.30px;top:17.90px;font-size:15px;line-height:15px;color:#e2e2e2;letter-spacing:-0.623px;">File</span>
<span style="left:153.20px;top:17.90px;font-size:15px;line-height:15px;color:#e2e2e2;letter-spacing:-0.016px;">Edit</span>
<span style="left:197.30px;top:17.90px;font-size:15px;line-height:15px;color:#e2e2e2;letter-spacing:0.070px;">Object</span>
<span style="left:259.00px;top:17.90px;font-size:15px;line-height:15px;color:#e2e2e2;letter-spacing:-0.239px;">Type</span>
<span style="left:309.30px;top:17.90px;font-size:15px;line-height:15px;color:#e2e2e2;letter-spacing:-0.418px;">Select</span>
<span style="left:367.40px;top:17.90px;font-size:15px;line-height:15px;color:#e2e2e2;letter-spacing:-0.156px;">Effect</span>
<span style="left:423.00px;top:17.90px;font-size:15px;line-height:15px;color:#e2e2e2;letter-spacing:-0.213px;">View</span>
<span style="left:472.30px;top:17.90px;font-size:15px;line-height:15px;color:#e2e2e2;letter-spacing:0.470px;">Window</span>
<span style="left:544.30px;top:17.90px;font-size:15px;line-height:15px;color:#e2e2e2;letter-spacing:-0.049px;">Help</span>
<div style="left:589px;top:14px;width:1px;height:26px;background:#5b5b5b;"></div>
<svg style="left:608px;top:15px;" width="26" height="24" viewBox="0 0 26 24"><rect x="2" y="3.5" width="20" height="15.5" fill="none" stroke="#c4c4c4" stroke-width="2"/><path fill="#535353" d="M9,9 h12 v14 h-12z"/><path fill="#c8c8c8" d="M11.2,8.2 q1.3,-1.2 2.4,0 v5 l1.2,-.6 q1,-.3 1.4,.5 l1,-.2 q1,-.1 1.3,.8 l.8,0 q1,.2 1,1.3 v3.5 q0,2.5 -1.6,4.5 h-6.3 q-1.8,-1.8 -3.2,-4.8 q-.5,-1.2 .6,-1.6 q1,-.2 1.4,.8 z"/></svg>
<span style="left:104.40px;top:58.57px;font-size:13.5px;line-height:13.5px;color:#f2f2f2;font-weight:bold;letter-spacing:0.373px;">logo-qtro-design.ai* @ 100 % (RGB/CPU Preview)</span>
<svg style="left:445px;top:59px;" width="12" height="12" viewBox="0 0 12 12"><path d="M2,2 L9.5,9.5 M9.5,2 L2,9.5" stroke="#f0f0f0" stroke-width="1.8" fill="none"/></svg>
<div style="left:2230.7px;top:12px;width:62.4px;height:30.6px;background:#1473e6;border-radius:15.3px"></div>
<span style="left:2242.60px;top:20.10px;font-size:15px;line-height:15px;color:#fff;letter-spacing:-0.407px;-webkit-text-stroke:.35px #fff;">Share</span>
<svg style="left:2302px;top:12px;" width="30" height="30" viewBox="0 0 30 30"><circle cx="12.9" cy="13.2" r="7" fill="none" stroke="#c8c8c8" stroke-width="2.3"/><path d="M18,18.4 L25,25.4" stroke="#c8c8c8" stroke-width="2.6"/></svg>
<div style="left:2344.5px;top:15px;width:1px;height:23px;background:#5e5e5e;"></div>
<svg style="left:2370px;top:21px;" width="24" height="16" viewBox="0 0 24 16"><rect x="1.3" y="1" width="9.6" height="13.6" fill="#cfcfcf"/><rect x="13" y="1" width="10" height="6" fill="#cfcfcf"/><rect x="13" y="8.6" width="10" height="6" fill="#cfcfcf"/></svg>
<svg style="left:2414px;top:19px;" width="23" height="19" viewBox="0 0 23 19"><rect x="1.8" y="1.8" width="19" height="15" fill="none" stroke="#cfcfcf" stroke-width="1.6"/><rect x="4" y="5" width="2.2" height="1.6" fill="#cfcfcf"/><rect x="4" y="8" width="2.2" height="1.6" fill="#cfcfcf"/><rect x="4" y="11" width="2.2" height="1.6" fill="#cfcfcf"/></svg>
<div style="left:2451.5px;top:8px;width:104px;height:23.8px;background:transparent;border:1px solid #626262;border-top:none;border-radius:0 0 5px 5px;box-sizing:border-box"></div>
<div style="left:2486px;top:8px;width:1px;height:23px;background:#626262;"></div>
<div style="left:2521px;top:8px;width:1px;height:23px;background:#626262;"></div>
<div style="left:2462px;top:21.4px;width:13.5px;height:3.2px;background:#c8c8c8;"></div>
<svg style="left:2493px;top:12px;" width="22" height="18" viewBox="0 0 22 18"><path fill="#c8c8c8" fill-rule="evenodd" d="M9,1.5 H20 V11.3 H16.5 V8.6 H17.4 V4.2 H11.6 V5.2 H9 Z"/><path fill="#c8c8c8" fill-rule="evenodd" d="M2.2,5.6 H14.2 V16 H2.2 Z M5,8.4 H11.4 V13.2 H5 Z"/><rect x="5" y="8.4" width="6.4" height="4.8" fill="#464646"/><rect x="14.2" y="4.2" width="3.2" height="4.4" fill="#464646"/></svg>
<svg style="left:2531px;top:13px;" width="18" height="14" viewBox="0 0 18 14"><path d="M2.5,2 L14.5,12 M14.5,2 L2.5,12" stroke="#c8c8c8" stroke-width="2.8" fill="none"/></svg>
<svg style="left:8.8px;top:51px;" width="8.6" height="6" viewBox="0 0 10 7"><path fill="#d6d6d6" d="M4.6,.4 V2.1 L2.7,3.5 L4.6,4.9 V6.6 L.4,3.5 Z M9,.4 V2.1 L7.1,3.5 L9,4.9 V6.6 L4.8,3.5 Z"/></svg>
<svg style="left:2543px;top:50.2px;" width="10" height="7" viewBox="0 0 10 7"><path fill="#d6d6d6" d="M.6,.4 V2.1 L2.5,3.5 L.6,4.9 V6.6 L4.8,3.5 Z M5,.4 V2.1 L6.9,3.5 L5,4.9 V6.6 L9.2,3.5 Z"/></svg>
<div style="left:97px;top:1428px;width:62px;height:18px;background:#434343;border:1px solid #4f4f4f;border-bottom:none;box-sizing:border-box"></div>
<span style="left:102.00px;top:1433.62px;font-size:12.5px;line-height:12.5px;color:#e6e6e6;">100%</span>
<div style="left:160px;top:1428px;width:21px;height:18px;background:#4b4b4b;border:1px solid #565656;border-bottom:none;box-sizing:border-box"></div>
<svg style="left:165px;top:1436px;" width="12" height="8" viewBox="0 0 12 8"><path d="M1.5,1.5 L5.5,5.3 L9.5,1.5" stroke="#e6e6e6" stroke-width="1.7" fill="none"/></svg>
<div style="left:189px;top:1428px;width:62px;height:18px;background:#434343;border:1px solid #4f4f4f;border-bottom:none;box-sizing:border-box"></div>
<span style="left:194.00px;top:1433.62px;font-size:12.5px;line-height:12.5px;color:#e6e6e6;">0&deg;</span>
<div style="left:252px;top:1428px;width:21px;height:18px;background:#4b4b4b;border:1px solid #565656;border-bottom:none;box-sizing:border-box"></div>
<svg style="left:257px;top:1436px;" width="12" height="8" viewBox="0 0 12 8"><path d="M1.5,1.5 L5.5,5.3 L9.5,1.5" stroke="#e6e6e6" stroke-width="1.7" fill="none"/></svg>
<div style="left:275px;top:1428px;width:50px;height:18px;background:#4f4f4f;"></div>
<svg style="left:283px;top:1433px;" width="42" height="12" viewBox="0 0 42 12"><path fill="#6a6a6a" d="M1,1 h2 v10 h-2z M11,1 v10 l-6,-5z M24,1 v10 l-6,-5z"/></svg>
<div style="left:326px;top:1428px;width:50px;height:18px;background:#434343;border:1px solid #4f4f4f;border-bottom:none;box-sizing:border-box"></div>
<span style="left:331.00px;top:1433.62px;font-size:12.5px;line-height:12.5px;color:#e6e6e6;">1</span>
<div style="left:377px;top:1428px;width:21px;height:18px;background:#4b4b4b;border:1px solid #565656;border-bottom:none;box-sizing:border-box"></div>
<svg style="left:382px;top:1436px;" width="12" height="8" viewBox="0 0 12 8"><path d="M1.5,1.5 L5.5,5.3 L9.5,1.5" stroke="#e6e6e6" stroke-width="1.7" fill="none"/></svg>
<div style="left:400px;top:1428px;width:50px;height:18px;background:#4f4f4f;"></div>
<svg style="left:408px;top:1433px;" width="42" height="12" viewBox="0 0 42 12"><path fill="#6a6a6a" d="M4,1 v10 l6,-5z M17,1 v10 l6,-5z M24,1 h2 v10 h-2z"/></svg>
<div style="left:451px;top:1428px;width:272px;height:18px;background:#4f4f4f;"></div>
<span style="left:550.50px;top:1434.42px;font-size:12.5px;line-height:12.5px;color:#d2d2d2;letter-spacing:-0.177px;">Selection</span>
<svg style="left:707px;top:1433px;" width="10" height="12" viewBox="0 0 10 12"><path fill="#d6d6d6" d="M2,1 v10 l6.5,-5z"/></svg>
<svg style="left:729px;top:1431px;" width="10" height="12" viewBox="0 0 10 12"><path d="M6.8,1.8 L2.6,6 L6.8,10.2" stroke="#b0b0b0" stroke-width="1.5" fill="none"/></svg>
<svg style="left:2207px;top:1431px;" width="10" height="14" viewBox="0 0 10 14"><path d="M3,2.2 L7.6,6.8 L3,11.4" stroke="#b0b0b0" stroke-width="1.5" fill="none"/></svg>
<div style="left:1457px;top:1428px;width:31px;height:18px;background:#666;border-radius:9px"></div>
<svg style="left:2227.7px;top:1411.4px;" width="12" height="10" viewBox="0 0 12 10"><path d="M1.5,2 L6,6.5 L10.5,2" stroke="#b8b8b8" stroke-width="1.6" fill="none"/></svg>
<svg style="left:2232px;top:89px;" width="12" height="9" viewBox="0 0 12 9"><path d="M1.2,2.2 L6,6.8" stroke="#a4a4a4" stroke-width="1.5"/></svg>
<div style="left:2224px;top:738.7px;width:18.8px;height:31.5px;background:#5f5f5f;border-radius:9.4px"></div>
<div style="left:2246px;top:62px;width:314px;height:34px;background:#424242;"></div>
<div style="left:2246px;top:62px;width:83px;height:34px;background:#535353;"></div>
<div style="left:2329px;top:62px;width:72.5px;height:33px;background:#464646;"></div>
<div style="left:2401.5px;top:62px;width:1px;height:33px;background:#3b3b3b;"></div>
<div style="left:2329px;top:62px;width:1px;height:33px;background:#3b3b3b;"></div>
<span style="left:2258.20px;top:73.14px;font-size:12px;line-height:12px;color:#f4f4f4;font-weight:bold;letter-spacing:-0.117px;">Properties</span>
<span style="left:2340.30px;top:73.14px;font-size:12px;line-height:12px;color:#c6c6c6;letter-spacing:0.110px;">Libraries</span>
<svg style="left:33px;top:65px;" width="24" height="6" viewBox="0 0 24 6"><rect x="0" y="0" width="1" height="6" fill="#3a3a3a"/><rect x="3" y="0" width="1" height="6" fill="#3a3a3a"/><rect x="6" y="0" width="1" height="6" fill="#3a3a3a"/><rect x="9" y="0" width="1" height="6" fill="#3a3a3a"/><rect x="12" y="0" width="1" height="6" fill="#3a3a3a"/><rect x="15" y="0" width="1" height="6" fill="#3a3a3a"/><rect x="18" y="0" width="1" height="6" fill="#3a3a3a"/><rect x="21" y="0" width="1" height="6" fill="#3a3a3a"/></svg>
<svg style="left:8.5px;top:84.5px" width="36" height="36" viewBox="-18 -18 36 36"><path d="M-5.3,-8.8 L7.3,2.9 L0.2,3.5 L-5.3,9 Z" fill="none" stroke="#c6c6c6" stroke-width="1.8" stroke-linejoin="miter"/></svg>
<svg style="left:46px;top:84px" width="36" height="36" viewBox="-18 -18 36 36"><path d="M-6.5,-11 L9,4 L-0.5,4.3 L-6.5,11 Z" fill="#c6c6c6"/><path fill="#c6c6c6" d="M16.1,11.9 v-4.6 l-4.6,4.6z"/></svg>
<svg style="left:8.5px;top:114px" width="36" height="36" viewBox="-18 -18 36 36"><g transform="translate(-2,2.2) scale(1.08)"><g transform="rotate(45)"><path fill="#c6c6c6" d="M-3.2,-12 h6.4 q1.2,0 1.2,1.2 v3.3 h-8.8 v-3.3 q0,-1.2 1.2,-1.2z M-4.4,-6.2 h8.8 l1.6,6.5 l-6,9.5 l-6,-9.5z"/><path d="M0,9.8 V2" stroke="#535353" stroke-width="1.3"/><circle cx="0" cy="1.2" r="1.5" fill="#535353"/></g></g><path fill="#c6c6c6" d="M16.1,11.9 v-4.6 l-4.6,4.6z"/></svg>
<svg style="left:49px;top:114px" width="36" height="36" viewBox="-18 -18 36 36"><g transform="scale(.92)"><g transform="rotate(45)"><path fill="#c6c6c6" d="M-3.2,-12 h6.4 q1.2,0 1.2,1.2 v3.3 h-8.8 v-3.3 q0,-1.2 1.2,-1.2z M-4.4,-6.2 h8.8 l1.6,6.5 l-6,9.5 l-6,-9.5z"/><path d="M0,9.8 V2" stroke="#535353" stroke-width="1.3"/><circle cx="0" cy="1.2" r="1.5" fill="#535353"/></g></g><path d="M-13,-8 q4,-4 5,1 q1,6 -3,9 q-3,4 0,7 q3,1.5 5,-1" fill="none" stroke="#c6c6c6" stroke-width="1.4"/></svg>
<svg style="left:8.5px;top:144px" width="36" height="36" viewBox="-18 -18 36 36"><rect x="-9.3" y="-8" width="19" height="16" fill="#6e6e6e" stroke="#c6c6c6" stroke-width="1.6"/><path fill="#c6c6c6" d="M16.1,11.9 v-4.6 l-4.6,4.6z"/></svg>
<svg style="left:46px;top:144px" width="36" height="36" viewBox="-18 -18 36 36"><g transform="translate(-.5,0) rotate(44)"><path fill="#c6c6c6" d="M-1.9,-13.5 q1.9,-2 3.8,0 l.7,11.5 h-5.2z M-2.7,-.5 h5.4 Q4.6,4.5 1.8,8 Q-.6,10.6 -4.2,11 Q-2.4,8.6 -3,5 Z"/></g><path fill="#c6c6c6" d="M16.1,11.9 v-4.6 l-4.6,4.6z"/></svg>
<svg style="left:8.5px;top:174px" width="36" height="36" viewBox="-18 -18 36 36"><path fill="#c6c6c6" d="M-9,-9.5 h18 v4.2 h-1.6 v-1.8 h-5.4 v14.6 h2.4 v2 h-8.8 v-2 h2.4 v-14.6 h-5.4 v1.8 h-1.6z"/><path fill="#c6c6c6" d="M16.1,11.9 v-4.6 l-4.6,4.6z"/></svg>
<svg style="left:46px;top:174px" width="36" height="36" viewBox="-18 -18 36 36"><path d="M-7,-6.5 A9.3,9.3 0 0 1 9.5,1" fill="none" stroke="#c6c6c6" stroke-width="1.8"/><path fill="#c6c6c6" d="M-10.5,-9.5 l7.2,-.3 l-4,6.6z"/><path d="M9.3,2.8 A9.3,9.3 0 0 1 -8.8,3" fill="none" stroke="#c6c6c6" stroke-width="1.7" stroke-dasharray="1.6 2.1"/><path fill="#c6c6c6" d="M16.1,11.9 v-4.6 l-4.6,4.6z"/></svg>
<svg style="left:8.5px;top:203.5px" width="36" height="36" viewBox="-18 -18 36 36"><g transform="translate(1.2,-.6) rotate(-45)"><rect x="-3.6" y="-6.3" width="11.6" height="12.6" rx="1.6" fill="#c6c6c6"/><rect x="-10.6" y="-5.6" width="6.6" height="11.2" rx="1.4" fill="none" stroke="#c6c6c6" stroke-width="1.5"/></g><path fill="#c6c6c6" d="M16.1,11.9 v-4.6 l-4.6,4.6z"/></svg>
<svg style="left:46px;top:203.5px" width="36" height="36" viewBox="-18 -18 36 36"><circle cx="-4.5" cy="-2" r="6.6" fill="none" stroke="#c6c6c6" stroke-width="1.4"/><path d="M-7,-8 A8.5,8.5 0 0 1 8.5,-3" fill="none" stroke="#c6c6c6" stroke-width="1.4"/><path d="M-9,-2 h8.5" stroke="#c6c6c6" stroke-width="1.4" stroke-dasharray="1.5 1.5"/><path fill="#c6c6c6" d="M2.5,-3 L13,5 L7.2,5.8 L4,11z"/></svg>
<svg style="left:8.5px;top:234px" width="36" height="36" viewBox="-18 -18 36 36"><defs><linearGradient id="gt"><stop offset="0" stop-color="#2a2a2a"/><stop offset="1" stop-color="#d0d0d0"/></linearGradient></defs><rect x="-9.3" y="-8" width="19" height="16" fill="url(#gt)" stroke="#c6c6c6" stroke-width="1.6"/><path fill="#c6c6c6" d="M16.1,11.9 v-4.6 l-4.6,4.6z"/></svg>
<svg style="left:46px;top:234px" width="36" height="36" viewBox="-18 -18 36 36"><g transform="translate(0,-.5) rotate(-45) scale(.9)"><path d="M-11,0 H11" stroke="#c6c6c6" stroke-width="1.7"/><path fill="#c6c6c6" d="M-11.5,0 l5,-3.4 v6.8z M11.5,0 l-5,-3.4 v6.8z"/><path d="M-12.5,-6 V6 M12.5,-6 V6" stroke="#c6c6c6" stroke-width="1.6"/><rect x="-3.4" y="-6.6" width="6.8" height="3.4" rx="1.4" fill="#c6c6c6"/></g></svg>
<svg style="left:8.5px;top:264px" width="36" height="36" viewBox="-18 -18 36 36"><g transform="translate(.5,0) rotate(45)"><rect x="-2.7" y="-13" width="5.4" height="6.5" rx="2.2" fill="#c6c6c6"/><rect x="-4.6" y="-7.4" width="9.2" height="2.8" rx=".6" fill="#c6c6c6"/><path d="M-2.3,-4.6 V9 Q-2.3,11.6 0,11.6 Q2.3,11.6 2.3,9 V-4.6" fill="none" stroke="#c6c6c6" stroke-width="1.6"/></g></svg>
<svg style="left:46px;top:264px" width="36" height="36" viewBox="-18 -18 36 36"><path fill="#c6c6c6" d="M-6,-11 q5,-1 5,4 q.5,4 5,2 q6,-3 8.5,2 q-4,-1 -6,2.5 q-3,6 -9,3.5 q-4,-2 -6,0 q-2,2 0,4 q-5,-1 -4,-6 q1,-4 6,-3.5 q-1,-3 .5,-6 q-3,.5 -4,-2.5 q2,1.5 4,0z"/><path d="M-10,8.5 L6,-7" stroke="#535353" stroke-width="3"/><path d="M-10,8.5 L6,-7" stroke="#c6c6c6" stroke-width="1.2"/><circle cx="-10" cy="8.5" r="2" fill="#535353" stroke="#c6c6c6" stroke-width="1.2"/><circle cx="6" cy="-7" r="2" fill="#535353" stroke="#c6c6c6" stroke-width="1.2"/><circle cx="-2" cy=".8" r="2" fill="#535353" stroke="#c6c6c6" stroke-width="1.2"/></svg>
<svg style="left:8.5px;top:293px" width="36" height="36" viewBox="-18 -18 36 36"><rect x="-11" y="-9.5" width="10" height="10" fill="#c6c6c6"/><circle cx="1" cy="1" r="5.6" fill="#8d8d8d" stroke="#b0b0b0" stroke-width="1"/><circle cx="6.8" cy="5" r="4.6" fill="#535353" stroke="#c6c6c6" stroke-width="1.5"/></svg>
<svg style="left:46px;top:295px" width="36" height="36" viewBox="-18 -18 36 36"><path d="M-13,-6.5 H-5.5 M-6.2,-13 V-6.5" stroke="#c6c6c6" stroke-width="1.5"/><path d="M-6,-5.6 H3.4 L8.6,-.4 V7.4 H-6 Z" fill="#6e6e6e" stroke="#c6c6c6" stroke-width="1.5"/><path d="M3.4,-5.6 V-.4 H8.6" fill="none" stroke="#c6c6c6" stroke-width="1.1"/></svg>
<svg style="left:11.0px;top:325px" width="36" height="36" viewBox="-18 -18 36 36"><circle cx="-4.4" cy="-4" r="7" fill="none" stroke="#c6c6c6" stroke-width="1.9"/><path d="M.8,1.2 L7.8,8.2" stroke="#c6c6c6" stroke-width="2.5"/><path fill="#c6c6c6" d="M13.5,11.2 v-4.6 l-4.6,4.6z"/></svg>
<div style="left:8px;top:359px;width:75px;height:1px;background:#484848;"></div>
<div style="left:30px;top:388px;width:44.5px;height:43.5px;background:#fff;border:1px solid #3c3c3c;box-sizing:border-box"></div>
<div style="left:43.5px;top:400.6px;width:19.5px;height:18.5px;background:#535353;border:1.5px solid #2c2c2c;box-sizing:border-box"></div>
<svg style="left:30px;top:388px;" width="45" height="44" viewBox="0 0 45 44"><path d="M1,43 L44,1" stroke="#f00000" stroke-width="2.6"/></svg>
<div style="left:8px;top:365.8px;width:44px;height:43.6px;background:#fff;border:1px solid #3c3c3c;box-sizing:border-box"></div>
<svg style="left:8px;top:365.8px;" width="44" height="44" viewBox="0 0 44 44"><path d="M1,42.6 L43,1" stroke="#f00000" stroke-width="2.6"/></svg>
<svg style="left:62px;top:365px;" width="18" height="18" viewBox="0 0 18 18"><path d="M3.5,5 q8,-1 8.5,8" fill="none" stroke="#c6c6c6" stroke-width="2.2"/><path fill="#c6c6c6" d="M1,5 l5.4,-4 v8z M12,16.5 l-4.3,-5.4 h8.6z"/></svg>
<svg style="left:7px;top:416px;" width="18" height="18" viewBox="0 0 18 18"><rect x="7" y="7" width="9" height="9" fill="#000" stroke="#c6c6c6" stroke-width="1.2"/><rect x="10" y="10" width="3.4" height="3.4" fill="#c6c6c6"/><rect x="1.6" y="1.6" width="9" height="9" fill="#fff" stroke="#000" stroke-width="1.4"/></svg>
<div style="left:8px;top:441.5px;width:72.5px;height:23px;background:transparent;border:1px solid #5d5d5d;border-radius:3px;box-sizing:border-box"></div>
<div style="left:32px;top:442px;width:1px;height:22px;background:#5d5d5d;"></div>
<div style="left:57px;top:441.5px;width:23.5px;height:23px;background:#303030;border-radius:3px"></div>
<div style="left:11.2px;top:445px;width:17px;height:17px;background:#fff;border:2px solid #000;box-sizing:border-box"></div>
<div style="left:35.8px;top:445px;width:17.4px;height:17px;background:linear-gradient(90deg,#fff,#000);border:2px solid #000;box-sizing:border-box"></div>
<div style="left:61px;top:445px;width:16.6px;height:17px;background:#fff;border:2px solid #000;box-sizing:border-box"></div>
<svg style="left:61px;top:445px;" width="17" height="17" viewBox="0 0 17 17"><path d="M2.5,14.5 L14.5,2.5" stroke="#f00000" stroke-width="3"/></svg>
<div style="left:8px;top:471.5px;width:72.5px;height:23px;background:transparent;border:1px solid #5d5d5d;border-radius:3px;box-sizing:border-box"></div>
<div style="left:8.5px;top:472px;width:23px;height:22px;background:#383838;border-radius:3px"></div>
<div style="left:32px;top:472px;width:1px;height:22px;background:#5d5d5d;"></div>
<div style="left:56.5px;top:472px;width:1px;height:22px;background:#5d5d5d;"></div>
<svg style="left:12px;top:475px;" width="18" height="18" viewBox="0 0 18 18"><circle cx="7" cy="7.5" r="5.4" fill="#6a6a6a" stroke="#c6c6c6" stroke-width="1.6"/><rect x="8.6" y="9" width="7" height="7" fill="#c6c6c6"/></svg>
<svg style="left:36px;top:475px;" width="18" height="18" viewBox="0 0 18 18"><rect x="8.6" y="9" width="7" height="7" fill="#c6c6c6"/><circle cx="7" cy="7.5" r="5.4" fill="#535353" stroke="#c6c6c6" stroke-width="1.6"/></svg>
<svg style="left:60px;top:475px;" width="18" height="18" viewBox="0 0 18 18"><circle cx="8" cy="8" r="5.4" fill="none" stroke="#6a6a6a" stroke-width="1.6"/><path d="M8,8 L8,3 A5,5 0 0 1 13,8z" fill="#6a6a6a"/></svg>
<svg style="left:30px;top:504px;" width="30" height="24" viewBox="0 0 30 24"><rect x="1.8" y="6.6" width="16" height="14.6" fill="#7a7a7a" stroke="#c6c6c6" stroke-width="1.5"/><rect x="1.8" y="6.6" width="16" height="3" fill="#c6c6c6"/><rect x="11.4" y="1.6" width="16.6" height="14" fill="#7a7a7a" stroke="#c6c6c6" stroke-width="1.5"/><rect x="11.4" y="1.6" width="16.6" height="3" fill="#c6c6c6"/></svg>
<svg style="left:35px;top:551px;" width="22" height="8" viewBox="0 0 22 8"><circle cx="3.2" cy="4" r="2.5" fill="#c6c6c6"/><circle cx="10" cy="4" r="2.5" fill="#c6c6c6"/><circle cx="16.8" cy="4" r="2.5" fill="#c6c6c6"/></svg>
<div style="left:2px;top:572px;width:87px;height:1px;background:#484848;"></div>
<div style="left:1874.1px;top:58px;width:359.5999999999999px;height:1336px;background:rgba(0,0,0,.18);border-radius:4px"></div>
<div style="left:1875.6px;top:58.7px;width:356.5999999999999px;height:1333.7px;background:#535353;border-radius:3px 3px 0 0"></div>
<div style="left:1875.6px;top:58.7px;width:356.5999999999999px;height:14.5px;background:#444;border-radius:3px 3px 0 0"></div>
<div style="left:1875.6px;top:73px;width:356.5999999999999px;height:1px;background:#383838;"></div>
<div style="left:1875.6px;top:74px;width:356.5999999999999px;height:33.3px;background:#424242;"></div>
<div style="left:1875.6px;top:74px;width:59.3px;height:33.3px;background:#535353;"></div>
<div style="left:1934.8999999999999px;top:74px;width:1px;height:32px;background:#3a3a3a;"></div>
<div style="left:1935.8999999999999px;top:106px;width:296.2999999999999px;height:1.3px;background:#3a3a3a;"></div>
<span style="left:1888.50px;top:84.79px;font-size:12.3px;line-height:12.3px;color:#f4f4f4;font-weight:bold;letter-spacing:-0.992px;">Layers</span>
<svg style="left:2194.6px;top:62.2px;" width="10" height="7" viewBox="0 0 10 7"><path fill="#d6d6d6" d="M4.6,.4 V2.1 L2.7,3.5 L4.6,4.9 V6.6 L.4,3.5 Z M9,.4 V2.1 L7.1,3.5 L9,4.9 V6.6 L4.8,3.5 Z"/></svg>
<svg style="left:2215px;top:60px;" width="12" height="12" viewBox="0 0 12 12"><path d="M2,2 L10,10 M10,2 L2,10" stroke="#d4d4d4" stroke-width="1.9" fill="none"/></svg>
<svg style="left:2210px;top:85px;" width="16" height="12" viewBox="0 0 16 12"><path d="M1.5,1.8 H14.5 M1.5,5.8 H14.5 M1.5,9.8 H14.5" stroke="#bdbdbd" stroke-width="1.4"/></svg>
<div style="left:1883px;top:115.5px;width:340.5px;height:39px;background:transparent;border:1px solid #5a5a5a;border-radius:3px;box-sizing:border-box"></div>
<div style="left:1890.6px;top:121.8px;width:296.8px;height:27.2px;background:#444;border:1px solid #5c5c5c;border-radius:3px;box-sizing:border-box"></div>
<svg style="left:1896px;top:127px;" width="18" height="18" viewBox="0 0 18 18"><circle cx="7.4" cy="6.8" r="4.7" fill="none" stroke="#cfcfcf" stroke-width="1.6"/><path d="M10.8,10.4 L15.2,15" stroke="#cfcfcf" stroke-width="2.2"/></svg>
<span style="left:1926.00px;top:129.35px;font-size:14px;line-height:14px;color:#636363;letter-spacing:-0.116px;">Search All</span>
<svg style="left:2199px;top:125px;" width="20" height="22" viewBox="0 0 20 22"><path fill="#c6c6c6" d="M1.5,2 H18.5 L12,10.5 V17.5 L8.6,20.2 V10.5 Z"/></svg>
<div style="left:1883px;top:159.3px;width:340.5px;height:1196px;background:transparent;border:1px solid #5d5d5d;border-radius:3px;box-sizing:border-box"></div>
<svg style="left:1888.6px;top:168.4px;" width="15.7" height="10.6" viewBox="0 0 16 10.4"><path fill="#c9c9c9" d="M0.1,5.2 Q8,-4.4 15.9,5.2 Q8,14.8 0.1,5.2Z"/><circle cx="8" cy="5.2" r="2.75" fill="none" stroke="#4e4e4e" stroke-width="1.35"/><circle cx="7.3" cy="4.5" r=".8" fill="#e6e6e6"/></svg>
<div style="left:1936.8px;top:162.6px;width:4.4px;height:23.6px;background:#4f4ff6;border-radius:1px"></div>
<svg style="left:1950.6px;top:169.5px;" width="12" height="9" viewBox="0 0 12 9"><path d="M1.5,1.8 L6,6.3 L10.5,1.8" stroke="#e4e4e4" stroke-width="1.6" fill="none"/></svg>
<svg style="left:1974.0px;top:163.20px;border:1.3px solid #000;box-sizing:border-box" width="22.2" height="22.2" viewBox="0 0 20 20" preserveAspectRatio="none"><rect width="20" height="20" fill="#fff"/><rect x="11" y="1" width="3" height="3" fill="#c07340" opacity=".7"/><rect x="4" y="16" width="3" height="3" fill="#b04844" opacity=".6"/><rect x="13" y="16" width="3" height="3" fill="#c07340" opacity=".6"/></svg>
<span style="left:2002.60px;top:168.74px;font-size:12px;line-height:12px;color:#e8e8e8;letter-spacing:0.096px;">Layer 5</span>
<svg style="left:2186px;top:167.7px;" width="13" height="13" viewBox="0 0 13 13"><circle cx="6.5" cy="6.5" r="4.6" fill="none" stroke="#d2d2d2" stroke-width="1.35"/></svg>
<div style="left:1936.8px;top:188.6px;width:4.4px;height:23.6px;background:#4f4ff6;border-radius:1px"></div>
<svg style="left:1978.8px;top:194.0px;" width="9" height="12" viewBox="0 0 9 12"><path d="M2,1.5 L6.5,6 L2,10.5" stroke="#e4e4e4" stroke-width="1.6" fill="none"/></svg>
<svg style="left:2003.1px;top:189.20px;border:1.3px solid #000;box-sizing:border-box" width="22.2" height="22.2" viewBox="0 0 20 20" preserveAspectRatio="none"><rect width="20" height="20" fill="#fff"/><g transform="translate(9.5,10)"><path fill="#2a5b37" d="M0,-1.5 L-5.5,-7 A9,9 0 0 1 5.5,-7Z"/><path fill="#c07340" d="M1.5,0 L7,-5.5 A9,9 0 0 1 7,5.5Z"/><path fill="#b04844" d="M0,1.5 L5.5,7 A9,9 0 0 1 -5.5,7Z"/><path fill="#dcc45c" d="M-1.5,0 L-7,5.5 A9,9 0 0 1 -7,-5.5Z"/><path d="M-6.5,-6.5 L6.5,6.5" stroke="#cfcfcf" stroke-width="1.6"/><path d="M6.3,6.3 L9.6,9.6" stroke="#000" stroke-width="1.8"/></g></svg>
<span style="left:2032.00px;top:194.74px;font-size:12px;line-height:12px;color:#e8e8e8;letter-spacing:0.472px;">&lt;Group&gt;</span>
<svg style="left:2186px;top:193.7px;" width="13" height="13" viewBox="0 0 13 13"><circle cx="6.5" cy="6.5" r="4.6" fill="none" stroke="#d2d2d2" stroke-width="1.35"/></svg>
<div style="left:1936.8px;top:214.6px;width:4.4px;height:23.6px;background:#4f4ff6;border-radius:1px"></div>
<svg style="left:2003.1px;top:215.20px;border:1.3px solid #000;box-sizing:border-box" width="22.2" height="22.2" viewBox="0 0 20 20" preserveAspectRatio="none"><rect width="20" height="20" fill="#fff"/></svg>
<span style="left:2032.00px;top:220.74px;font-size:12px;line-height:12px;color:#e8e8e8;letter-spacing:0.360px;">&lt;Guide&gt;</span>
<svg style="left:2186px;top:219.7px;" width="13" height="13" viewBox="0 0 13 13"><circle cx="6.5" cy="6.5" r="4.6" fill="none" stroke="#d2d2d2" stroke-width="1.35"/></svg>
<div style="left:1936.8px;top:240.6px;width:4.4px;height:24.6px;background:#4f4ff6;border-radius:1px"></div>
<svg style="left:2003.1px;top:241.20px;border:1.3px solid #000;box-sizing:border-box" width="22.2" height="22.2" viewBox="0 0 20 20" preserveAspectRatio="none"><rect width="20" height="20" fill="#fff"/></svg>
<span style="left:2032.00px;top:247.24px;font-size:12px;line-height:12px;color:#e8e8e8;letter-spacing:0.360px;">&lt;Guide&gt;</span>
<svg style="left:2186px;top:246.2px;" width="13" height="13" viewBox="0 0 13 13"><circle cx="6.5" cy="6.5" r="4.6" fill="none" stroke="#d2d2d2" stroke-width="1.35"/></svg>
<div style="left:1936.8px;top:267.6px;width:4.4px;height:23.6px;background:#4f4ff6;border-radius:1px"></div>
<svg style="left:2003.1px;top:268.20px;border:1.3px solid #000;box-sizing:border-box" width="22.2" height="22.2" viewBox="0 0 20 20" preserveAspectRatio="none"><rect width="20" height="20" fill="#fff"/></svg>
<span style="left:2032.00px;top:273.74px;font-size:12px;line-height:12px;color:#e8e8e8;letter-spacing:0.360px;">&lt;Guide&gt;</span>
<svg style="left:2186px;top:272.7px;" width="13" height="13" viewBox="0 0 13 13"><circle cx="6.5" cy="6.5" r="4.6" fill="none" stroke="#d2d2d2" stroke-width="1.35"/></svg>
<svg style="left:1888.6px;top:299.4px;" width="15.7" height="10.6" viewBox="0 0 16 10.4"><path fill="#c9c9c9" d="M0.1,5.2 Q8,-4.4 15.9,5.2 Q8,14.8 0.1,5.2Z"/><circle cx="8" cy="5.2" r="2.75" fill="none" stroke="#4e4e4e" stroke-width="1.35"/><circle cx="7.3" cy="4.5" r=".8" fill="#e6e6e6"/></svg>
<div style="left:1936.8px;top:293.6px;width:4.4px;height:23.6px;background:#4f4ff6;border-radius:1px"></div>
<svg style="left:2003.1px;top:294.20px;border:1.3px solid #000;box-sizing:border-box" width="22.2" height="22.2" viewBox="0 0 20 20" preserveAspectRatio="none"><rect width="20" height="20" fill="#fff"/><path d="M10,1 L19,10 L10,19 L1,10Z" fill="#000"/></svg>
<span style="left:2032.00px;top:299.74px;font-size:12px;line-height:12px;color:#e8e8e8;letter-spacing:0.265px;">&lt;Rectangle&gt;</span>
<svg style="left:2186px;top:298.7px;" width="13" height="13" viewBox="0 0 13 13"><circle cx="6.5" cy="6.5" r="4.6" fill="none" stroke="#d2d2d2" stroke-width="1.35"/></svg>
<svg style="left:1888.6px;top:325.4px;" width="15.7" height="10.6" viewBox="0 0 16 10.4"><path fill="#c9c9c9" d="M0.1,5.2 Q8,-4.4 15.9,5.2 Q8,14.8 0.1,5.2Z"/><circle cx="8" cy="5.2" r="2.75" fill="none" stroke="#4e4e4e" stroke-width="1.35"/><circle cx="7.3" cy="4.5" r=".8" fill="#e6e6e6"/></svg>
<div style="left:1936.8px;top:319.6px;width:4.4px;height:23.6px;background:#4f4ff6;border-radius:1px"></div>
<svg style="left:2003.1px;top:320.20px;border:1.3px solid #000;box-sizing:border-box" width="22.2" height="22.2" viewBox="0 0 20 20" preserveAspectRatio="none"><rect width="20" height="20" fill="#fff"/><path d="M0,0 L20,20" stroke="#d4d4d4" stroke-width="2.4"/></svg>
<span style="left:2032.00px;top:325.74px;font-size:12px;line-height:12px;color:#e8e8e8;letter-spacing:0.265px;">&lt;Rectangle&gt;</span>
<svg style="left:2186px;top:324.7px;" width="13" height="13" viewBox="0 0 13 13"><circle cx="6.5" cy="6.5" r="4.6" fill="none" stroke="#d2d2d2" stroke-width="1.35"/></svg>
<svg style="left:1888.6px;top:351.9px;" width="15.7" height="10.6" viewBox="0 0 16 10.4"><path fill="#c9c9c9" d="M0.1,5.2 Q8,-4.4 15.9,5.2 Q8,14.8 0.1,5.2Z"/><circle cx="8" cy="5.2" r="2.75" fill="none" stroke="#4e4e4e" stroke-width="1.35"/><circle cx="7.3" cy="4.5" r=".8" fill="#e6e6e6"/></svg>
<div style="left:1936.8px;top:345.6px;width:4.4px;height:24.6px;background:#4f4ff6;border-radius:1px"></div>
<svg style="left:2003.1px;top:346.20px;border:1.3px solid #000;box-sizing:border-box" width="22.2" height="22.2" viewBox="0 0 20 20" preserveAspectRatio="none"><rect width="20" height="20" fill="#fff"/><path d="M10,6 L18.5,14 H1.5Z" fill="#000"/></svg>
<span style="left:2032.00px;top:352.24px;font-size:12px;line-height:12px;color:#e8e8e8;letter-spacing:0.500px;">&lt;Path&gt;</span>
<svg style="left:2186px;top:351.2px;" width="13" height="13" viewBox="0 0 13 13"><circle cx="6.5" cy="6.5" r="4.6" fill="none" stroke="#d2d2d2" stroke-width="1.35"/></svg>
<svg style="left:1888.6px;top:378.4px;" width="15.7" height="10.6" viewBox="0 0 16 10.4"><path fill="#c9c9c9" d="M0.1,5.2 Q8,-4.4 15.9,5.2 Q8,14.8 0.1,5.2Z"/><circle cx="8" cy="5.2" r="2.75" fill="none" stroke="#4e4e4e" stroke-width="1.35"/><circle cx="7.3" cy="4.5" r=".8" fill="#e6e6e6"/></svg>
<div style="left:1936.8px;top:372.6px;width:4.4px;height:23.6px;background:#4f4ff6;border-radius:1px"></div>
<svg style="left:2003.1px;top:373.20px;border:1.3px solid #000;box-sizing:border-box" width="22.2" height="22.2" viewBox="0 0 20 20" preserveAspectRatio="none"><rect width="20" height="20" fill="#fff"/><path d="M0.5,5 L5,0.5 L19.5,14.5 L15,19Z" fill="#000"/></svg>
<span style="left:2032.00px;top:378.74px;font-size:12px;line-height:12px;color:#e8e8e8;letter-spacing:0.265px;">&lt;Rectangle&gt;</span>
<svg style="left:2186px;top:377.7px;" width="13" height="13" viewBox="0 0 13 13"><circle cx="6.5" cy="6.5" r="4.6" fill="none" stroke="#d2d2d2" stroke-width="1.35"/></svg>
<svg style="left:1888.6px;top:404.4px;" width="15.7" height="10.6" viewBox="0 0 16 10.4"><path fill="#c9c9c9" d="M0.1,5.2 Q8,-4.4 15.9,5.2 Q8,14.8 0.1,5.2Z"/><circle cx="8" cy="5.2" r="2.75" fill="none" stroke="#4e4e4e" stroke-width="1.35"/><circle cx="7.3" cy="4.5" r=".8" fill="#e6e6e6"/></svg>
<div style="left:1936.8px;top:398.6px;width:4.4px;height:23.6px;background:#4f4ff6;border-radius:1px"></div>
<svg style="left:2003.1px;top:399.20px;border:1.3px solid #000;box-sizing:border-box" width="22.2" height="22.2" viewBox="0 0 20 20" preserveAspectRatio="none"><rect width="20" height="20" fill="#fff"/><path d="M3.5,10 L12,1.2 Q18.5,10 12,18.8Z" fill="#d8803c"/></svg>
<span style="left:2032.00px;top:404.74px;font-size:12px;line-height:12px;color:#e8e8e8;letter-spacing:0.265px;">&lt;Rectangle&gt;</span>
<svg style="left:2186px;top:403.7px;" width="13" height="13" viewBox="0 0 13 13"><circle cx="6.5" cy="6.5" r="4.6" fill="none" stroke="#d2d2d2" stroke-width="1.35"/></svg>
<svg style="left:1888.6px;top:430.4px;" width="15.7" height="10.6" viewBox="0 0 16 10.4"><path fill="#c9c9c9" d="M0.1,5.2 Q8,-4.4 15.9,5.2 Q8,14.8 0.1,5.2Z"/><circle cx="8" cy="5.2" r="2.75" fill="none" stroke="#4e4e4e" stroke-width="1.35"/><circle cx="7.3" cy="4.5" r=".8" fill="#e6e6e6"/></svg>
<div style="left:1936.8px;top:424.6px;width:4.4px;height:23.6px;background:#4f4ff6;border-radius:1px"></div>
<svg style="left:2003.1px;top:425.20px;border:1.3px solid #000;box-sizing:border-box" width="22.2" height="22.2" viewBox="0 0 20 20" preserveAspectRatio="none"><rect width="20" height="20" fill="#fff"/><path d="M10,3.5 L18.8,12 Q10,18.5 1.2,12Z" fill="#c84440"/></svg>
<span style="left:2032.00px;top:430.74px;font-size:12px;line-height:12px;color:#e8e8e8;letter-spacing:0.265px;">&lt;Rectangle&gt;</span>
<svg style="left:2186px;top:429.7px;" width="13" height="13" viewBox="0 0 13 13"><circle cx="6.5" cy="6.5" r="4.6" fill="none" stroke="#d2d2d2" stroke-width="1.35"/></svg>
<svg style="left:1888.6px;top:456.9px;" width="15.7" height="10.6" viewBox="0 0 16 10.4"><path fill="#c9c9c9" d="M0.1,5.2 Q8,-4.4 15.9,5.2 Q8,14.8 0.1,5.2Z"/><circle cx="8" cy="5.2" r="2.75" fill="none" stroke="#4e4e4e" stroke-width="1.35"/><circle cx="7.3" cy="4.5" r=".8" fill="#e6e6e6"/></svg>
<div style="left:1936.8px;top:450.6px;width:4.4px;height:24.6px;background:#4f4ff6;border-radius:1px"></div>
<svg style="left:2003.1px;top:451.20px;border:1.3px solid #000;box-sizing:border-box" width="22.2" height="22.2" viewBox="0 0 20 20" preserveAspectRatio="none"><rect width="20" height="20" fill="#fff"/><path d="M10,16.5 L1.2,8 Q10,1.5 18.8,8Z" fill="#246c38"/></svg>
<span style="left:2032.00px;top:457.24px;font-size:12px;line-height:12px;color:#e8e8e8;letter-spacing:0.265px;">&lt;Rectangle&gt;</span>
<svg style="left:2186px;top:456.2px;" width="13" height="13" viewBox="0 0 13 13"><circle cx="6.5" cy="6.5" r="4.6" fill="none" stroke="#d2d2d2" stroke-width="1.35"/></svg>
<svg style="left:1888.6px;top:483.4px;" width="15.7" height="10.6" viewBox="0 0 16 10.4"><path fill="#c9c9c9" d="M0.1,5.2 Q8,-4.4 15.9,5.2 Q8,14.8 0.1,5.2Z"/><circle cx="8" cy="5.2" r="2.75" fill="none" stroke="#4e4e4e" stroke-width="1.35"/><circle cx="7.3" cy="4.5" r=".8" fill="#e6e6e6"/></svg>
<div style="left:1936.8px;top:477.6px;width:4.4px;height:23.6px;background:#4f4ff6;border-radius:1px"></div>
<svg style="left:2003.1px;top:478.20px;border:1.3px solid #000;box-sizing:border-box" width="22.2" height="22.2" viewBox="0 0 20 20" preserveAspectRatio="none"><rect width="20" height="20" fill="#fff"/><path d="M16.5,10 L8,1.2 Q1.5,10 8,18.8Z" fill="#e8d050"/></svg>
<span style="left:2032.00px;top:483.74px;font-size:12px;line-height:12px;color:#e8e8e8;letter-spacing:0.265px;">&lt;Rectangle&gt;</span>
<svg style="left:2186px;top:482.7px;" width="13" height="13" viewBox="0 0 13 13"><circle cx="6.5" cy="6.5" r="4.6" fill="none" stroke="#d2d2d2" stroke-width="1.35"/></svg>
<svg style="left:1888.6px;top:509.4px;" width="15.7" height="10.6" viewBox="0 0 16 10.4"><path fill="#c9c9c9" d="M0.1,5.2 Q8,-4.4 15.9,5.2 Q8,14.8 0.1,5.2Z"/><circle cx="8" cy="5.2" r="2.75" fill="none" stroke="#4e4e4e" stroke-width="1.35"/><circle cx="7.3" cy="4.5" r=".8" fill="#e6e6e6"/></svg>
<div style="left:1936.8px;top:503.6px;width:4.4px;height:23.6px;background:#4f4ff6;border-radius:1px"></div>
<svg style="left:1978.8px;top:509.0px;" width="9" height="12" viewBox="0 0 9 12"><path d="M2,1.5 L6.5,6 L2,10.5" stroke="#e4e4e4" stroke-width="1.6" fill="none"/></svg>
<svg style="left:2003.1px;top:504.20px;border:1.3px solid #000;box-sizing:border-box" width="22.2" height="22.2" viewBox="0 0 20 20" preserveAspectRatio="none"><rect width="20" height="20" fill="#fff"/><g transform="translate(10,13) scale(1.25)"><path fill="#2a5b37" d="M0,-1.5 L-5.5,-7 A9,9 0 0 1 5.5,-7Z"/><path fill="#c07340" d="M1.5,0 L7,-5.5 A9,9 0 0 1 7,5.5Z"/><path fill="#b04844" d="M0,1.5 L5.5,7 A9,9 0 0 1 -5.5,7Z"/><path fill="#dcc45c" d="M-1.5,0 L-7,5.5 A9,9 0 0 1 -7,-5.5Z"/><path d="M-6.5,-6.5 L6.5,6.5" stroke="#e8e8e8" stroke-width="1.3"/></g></svg>
<span style="left:2032.00px;top:509.74px;font-size:12px;line-height:12px;color:#e8e8e8;letter-spacing:0.472px;">&lt;Group&gt;</span>
<svg style="left:2186px;top:508.7px;" width="13" height="13" viewBox="0 0 13 13"><circle cx="6.5" cy="6.5" r="4.6" fill="none" stroke="#d2d2d2" stroke-width="1.35"/></svg>
<svg style="left:1888.6px;top:535.4px;" width="15.7" height="10.6" viewBox="0 0 16 10.4"><path fill="#c9c9c9" d="M0.1,5.2 Q8,-4.4 15.9,5.2 Q8,14.8 0.1,5.2Z"/><circle cx="8" cy="5.2" r="2.75" fill="none" stroke="#4e4e4e" stroke-width="1.35"/><circle cx="7.3" cy="4.5" r=".8" fill="#e6e6e6"/></svg>
<div style="left:1936.8px;top:529.6px;width:4.4px;height:23.6px;background:#4f4ff6;border-radius:1px"></div>
<svg style="left:2003.1px;top:530.20px;border:1.3px solid #000;box-sizing:border-box" width="22.2" height="22.2" viewBox="0 0 20 20" preserveAspectRatio="none"><rect width="20" height="20" fill="#fff"/><path d="M10,6 L18.5,14 H1.5Z" fill="#000"/></svg>
<span style="left:2032.00px;top:535.74px;font-size:12px;line-height:12px;color:#e8e8e8;letter-spacing:0.500px;">&lt;Path&gt;</span>
<svg style="left:2186px;top:534.7px;" width="13" height="13" viewBox="0 0 13 13"><circle cx="6.5" cy="6.5" r="4.6" fill="none" stroke="#d2d2d2" stroke-width="1.35"/></svg>
<svg style="left:1888.6px;top:561.9px;" width="15.7" height="10.6" viewBox="0 0 16 10.4"><path fill="#c9c9c9" d="M0.1,5.2 Q8,-4.4 15.9,5.2 Q8,14.8 0.1,5.2Z"/><circle cx="8" cy="5.2" r="2.75" fill="none" stroke="#4e4e4e" stroke-width="1.35"/><circle cx="7.3" cy="4.5" r=".8" fill="#e6e6e6"/></svg>
<div style="left:1936.8px;top:555.6px;width:4.4px;height:24.6px;background:#4f4ff6;border-radius:1px"></div>
<svg style="left:2003.1px;top:556.20px;border:1.3px solid #000;box-sizing:border-box" width="22.2" height="22.2" viewBox="0 0 20 20" preserveAspectRatio="none"><rect width="20" height="20" fill="#fff"/><path d="M0.5,5 L5,0.5 L19.5,14.5 L15,19Z" fill="#000"/></svg>
<span style="left:2032.00px;top:562.24px;font-size:12px;line-height:12px;color:#e8e8e8;letter-spacing:0.265px;">&lt;Rectangle&gt;</span>
<svg style="left:2186px;top:561.2px;" width="13" height="13" viewBox="0 0 13 13"><circle cx="6.5" cy="6.5" r="4.6" fill="none" stroke="#d2d2d2" stroke-width="1.35"/></svg>
<svg style="left:1888.6px;top:588.4px;" width="15.7" height="10.6" viewBox="0 0 16 10.4"><path fill="#c9c9c9" d="M0.1,5.2 Q8,-4.4 15.9,5.2 Q8,14.8 0.1,5.2Z"/><circle cx="8" cy="5.2" r="2.75" fill="none" stroke="#4e4e4e" stroke-width="1.35"/><circle cx="7.3" cy="4.5" r=".8" fill="#e6e6e6"/></svg>
<div style="left:1936.8px;top:582.6px;width:4.4px;height:23.6px;background:#4f4ff6;border-radius:1px"></div>
<svg style="left:2003.1px;top:583.20px;border:1.3px solid #000;box-sizing:border-box" width="22.2" height="22.2" viewBox="0 0 20 20" preserveAspectRatio="none"><rect width="20" height="20" fill="#fff"/><path d="M3.5,10 L12,1.2 Q18.5,10 12,18.8Z" fill="#d8803c"/></svg>
<span style="left:2032.00px;top:588.74px;font-size:12px;line-height:12px;color:#e8e8e8;letter-spacing:0.265px;">&lt;Rectangle&gt;</span>
<svg style="left:2186px;top:587.7px;" width="13" height="13" viewBox="0 0 13 13"><circle cx="6.5" cy="6.5" r="4.6" fill="none" stroke="#d2d2d2" stroke-width="1.35"/></svg>
<svg style="left:1888.6px;top:614.4px;" width="15.7" height="10.6" viewBox="0 0 16 10.4"><path fill="#c9c9c9" d="M0.1,5.2 Q8,-4.4 15.9,5.2 Q8,14.8 0.1,5.2Z"/><circle cx="8" cy="5.2" r="2.75" fill="none" stroke="#4e4e4e" stroke-width="1.35"/><circle cx="7.3" cy="4.5" r=".8" fill="#e6e6e6"/></svg>
<div style="left:1936.8px;top:608.6px;width:4.4px;height:23.6px;background:#4f4ff6;border-radius:1px"></div>
<svg style="left:2003.1px;top:609.20px;border:1.3px solid #000;box-sizing:border-box" width="22.2" height="22.2" viewBox="0 0 20 20" preserveAspectRatio="none"><rect width="20" height="20" fill="#fff"/><path d="M10,3.5 L18.8,12 Q10,18.5 1.2,12Z" fill="#c84440"/></svg>
<span style="left:2032.00px;top:614.74px;font-size:12px;line-height:12px;color:#e8e8e8;letter-spacing:0.265px;">&lt;Rectangle&gt;</span>
<svg style="left:2186px;top:613.7px;" width="13" height="13" viewBox="0 0 13 13"><circle cx="6.5" cy="6.5" r="4.6" fill="none" stroke="#d2d2d2" stroke-width="1.35"/></svg>
<svg style="left:1888.6px;top:640.4px;" width="15.7" height="10.6" viewBox="0 0 16 10.4"><path fill="#c9c9c9" d="M0.1,5.2 Q8,-4.4 15.9,5.2 Q8,14.8 0.1,5.2Z"/><circle cx="8" cy="5.2" r="2.75" fill="none" stroke="#4e4e4e" stroke-width="1.35"/><circle cx="7.3" cy="4.5" r=".8" fill="#e6e6e6"/></svg>
<div style="left:1936.8px;top:634.6px;width:4.4px;height:23.6px;background:#4f4ff6;border-radius:1px"></div>
<svg style="left:2003.1px;top:635.20px;border:1.3px solid #000;box-sizing:border-box" width="22.2" height="22.2" viewBox="0 0 20 20" preserveAspectRatio="none"><rect width="20" height="20" fill="#fff"/><path d="M10,16.5 L1.2,8 Q10,1.5 18.8,8Z" fill="#246c38"/></svg>
<span style="left:2032.00px;top:640.74px;font-size:12px;line-height:12px;color:#e8e8e8;letter-spacing:0.265px;">&lt;Rectangle&gt;</span>
<svg style="left:2186px;top:639.7px;" width="13" height="13" viewBox="0 0 13 13"><circle cx="6.5" cy="6.5" r="4.6" fill="none" stroke="#d2d2d2" stroke-width="1.35"/></svg>
<svg style="left:1888.6px;top:666.9px;" width="15.7" height="10.6" viewBox="0 0 16 10.4"><path fill="#c9c9c9" d="M0.1,5.2 Q8,-4.4 15.9,5.2 Q8,14.8 0.1,5.2Z"/><circle cx="8" cy="5.2" r="2.75" fill="none" stroke="#4e4e4e" stroke-width="1.35"/><circle cx="7.3" cy="4.5" r=".8" fill="#e6e6e6"/></svg>
<div style="left:1936.8px;top:660.6px;width:4.4px;height:24.6px;background:#4f4ff6;border-radius:1px"></div>
<svg style="left:2003.1px;top:661.20px;border:1.3px solid #000;box-sizing:border-box" width="22.2" height="22.2" viewBox="0 0 20 20" preserveAspectRatio="none"><rect width="20" height="20" fill="#fff"/><path d="M16.5,10 L8,1.2 Q1.5,10 8,18.8Z" fill="#e8d050"/></svg>
<span style="left:2032.00px;top:667.24px;font-size:12px;line-height:12px;color:#e8e8e8;letter-spacing:0.265px;">&lt;Rectangle&gt;</span>
<svg style="left:2186px;top:666.2px;" width="13" height="13" viewBox="0 0 13 13"><circle cx="6.5" cy="6.5" r="4.6" fill="none" stroke="#d2d2d2" stroke-width="1.35"/></svg>
<div style="left:1936.8px;top:687.6px;width:4.4px;height:23.6px;background:#4f4ff6;border-radius:1px"></div>
<svg style="left:2003.1px;top:688.20px;border:1.3px solid #000;box-sizing:border-box" width="22.2" height="22.2" viewBox="0 0 20 20" preserveAspectRatio="none"><rect width="20" height="20" fill="#fff"/></svg>
<span style="left:2032.00px;top:693.74px;font-size:12px;line-height:12px;color:#e8e8e8;letter-spacing:0.360px;">&lt;Guide&gt;</span>
<svg style="left:2186px;top:692.7px;" width="13" height="13" viewBox="0 0 13 13"><circle cx="6.5" cy="6.5" r="4.6" fill="none" stroke="#d2d2d2" stroke-width="1.35"/></svg>
<div style="left:1883.5px;top:713px;width:340px;height:25px;background:#4d6580;"></div>
<svg style="left:2215px;top:712.6px;" width="9" height="9" viewBox="0 0 9 9"><path d="M0.5,0.5 H8.5 V8.5Z" fill="#cfcfcf"/></svg>
<svg style="left:1888.6px;top:719.4px;" width="15.7" height="10.6" viewBox="0 0 16 10.4"><path fill="#c9c9c9" d="M0.1,5.2 Q8,-4.4 15.9,5.2 Q8,14.8 0.1,5.2Z"/><circle cx="8" cy="5.2" r="2.75" fill="none" stroke="#4e4e4e" stroke-width="1.35"/><circle cx="7.3" cy="4.5" r=".8" fill="#e6e6e6"/></svg>
<div style="left:1936.8px;top:713.6px;width:4.4px;height:23.6px;background:#4f4ff6;border-radius:1px"></div>
<svg style="left:1950.6px;top:720.5px;" width="12" height="9" viewBox="0 0 12 9"><path d="M1.5,1.8 L6,6.3 L10.5,1.8" stroke="#e4e4e4" stroke-width="1.6" fill="none"/></svg>
<svg style="left:1974.0px;top:714.20px;border:1.3px solid #000;box-sizing:border-box" width="22.2" height="22.2" viewBox="0 0 20 20" preserveAspectRatio="none"><rect width="20" height="20" fill="#fff"/><circle cx="5" cy="4" r="3.6" fill="#76fb4c"/><path d="M5,0 V8 M1,4 H9" stroke="#fff" stroke-width=".7"/><circle cx="15.5" cy="9" r="3.6" fill="#76fb4c"/><rect x="15.5" y="9" width="4" height="4" fill="#fff"/><circle cx="4.5" cy="15" r="3.8" fill="#76fb4c"/></svg>
<span style="left:2002.60px;top:719.74px;font-size:12px;line-height:12px;color:#e8e8e8;letter-spacing:0.129px;">Layer 4</span>
<svg style="left:2186px;top:718.7px;" width="13" height="13" viewBox="0 0 13 13"><circle cx="6.5" cy="6.5" r="4.6" fill="none" stroke="#d2d2d2" stroke-width="1.35"/></svg>
<svg style="left:1888.6px;top:745.4px;" width="15.7" height="10.6" viewBox="0 0 16 10.4"><path fill="#c9c9c9" d="M0.1,5.2 Q8,-4.4 15.9,5.2 Q8,14.8 0.1,5.2Z"/><circle cx="8" cy="5.2" r="2.75" fill="none" stroke="#4e4e4e" stroke-width="1.35"/><circle cx="7.3" cy="4.5" r=".8" fill="#e6e6e6"/></svg>
<div style="left:1936.8px;top:739.6px;width:4.4px;height:23.6px;background:#4f4ff6;border-radius:1px"></div>
<svg style="left:1976.8px;top:746.5px;" width="12" height="9" viewBox="0 0 12 9"><path d="M1.5,1.8 L6,6.3 L10.5,1.8" stroke="#e4e4e4" stroke-width="1.6" fill="none"/></svg>
<svg style="left:2003.1px;top:740.20px;border:1.3px solid #000;box-sizing:border-box" width="22.2" height="22.2" viewBox="0 0 20 20" preserveAspectRatio="none"><rect width="20" height="20" fill="#fff"/><path fill="#76fb4c" d="M9.5,9.5 H0 A9.5,9.5 0 0 1 9.5,0Z M10.5,9.5 V0 A9.5,9.5 0 0 1 20,9.5Z M9.5,10.5 V20 A9.5,9.5 0 0 1 0,10.5Z M20,10.5 V20 A9.5,9.5 0 0 1 10.5,10.5Z"/></svg>
<span style="left:2032.00px;top:745.74px;font-size:12px;line-height:12px;color:#e8e8e8;letter-spacing:0.472px;">&lt;Group&gt;</span>
<svg style="left:2186px;top:744.7px;" width="13" height="13" viewBox="0 0 13 13"><circle cx="6.5" cy="6.5" r="4.6" fill="none" stroke="#d2d2d2" stroke-width="1.35"/></svg>
<div style="left:1936.8px;top:765.6px;width:4.4px;height:24.6px;background:#4f4ff6;border-radius:1px"></div>
<svg style="left:2031.2px;top:766.20px;border:1.3px solid #000;box-sizing:border-box" width="22.2" height="22.2" viewBox="0 0 20 20" preserveAspectRatio="none"><rect width="20" height="20" fill="#fff"/></svg>
<span style="left:2060.60px;top:772.24px;font-size:12px;line-height:12px;color:#e8e8e8;letter-spacing:0.360px;">&lt;Guide&gt;</span>
<svg style="left:2186px;top:771.2px;" width="13" height="13" viewBox="0 0 13 13"><circle cx="6.5" cy="6.5" r="4.6" fill="none" stroke="#d2d2d2" stroke-width="1.35"/></svg>
<div style="left:1936.8px;top:792.6px;width:4.4px;height:23.6px;background:#4f4ff6;border-radius:1px"></div>
<svg style="left:2031.2px;top:793.20px;border:1.3px solid #000;box-sizing:border-box" width="22.2" height="22.2" viewBox="0 0 20 20" preserveAspectRatio="none"><rect width="20" height="20" fill="#fff"/></svg>
<span style="left:2060.60px;top:798.74px;font-size:12px;line-height:12px;color:#e8e8e8;letter-spacing:0.360px;">&lt;Guide&gt;</span>
<svg style="left:2186px;top:797.7px;" width="13" height="13" viewBox="0 0 13 13"><circle cx="6.5" cy="6.5" r="4.6" fill="none" stroke="#d2d2d2" stroke-width="1.35"/></svg>
<svg style="left:1888.6px;top:824.4px;" width="15.7" height="10.6" viewBox="0 0 16 10.4"><path fill="#c9c9c9" d="M0.1,5.2 Q8,-4.4 15.9,5.2 Q8,14.8 0.1,5.2Z"/><circle cx="8" cy="5.2" r="2.75" fill="none" stroke="#4e4e4e" stroke-width="1.35"/><circle cx="7.3" cy="4.5" r=".8" fill="#e6e6e6"/></svg>
<div style="left:1936.8px;top:818.6px;width:4.4px;height:23.6px;background:#4f4ff6;border-radius:1px"></div>
<svg style="left:2031.2px;top:819.20px;border:1.3px solid #000;box-sizing:border-box" width="22.2" height="22.2" viewBox="0 0 20 20" preserveAspectRatio="none"><rect width="20" height="20" fill="#fff"/><path d="M0,0 H20 V20 H12 A13,19 0 0 1 0,0Z" fill="#76fb4c"/></svg>
<span style="left:2060.60px;top:824.74px;font-size:12px;line-height:12px;color:#e8e8e8;letter-spacing:0.265px;">&lt;Rectangle&gt;</span>
<svg style="left:2186px;top:823.7px;" width="13" height="13" viewBox="0 0 13 13"><circle cx="6.5" cy="6.5" r="4.6" fill="none" stroke="#d2d2d2" stroke-width="1.35"/></svg>
<svg style="left:1888.6px;top:850.4px;" width="15.7" height="10.6" viewBox="0 0 16 10.4"><path fill="#c9c9c9" d="M0.1,5.2 Q8,-4.4 15.9,5.2 Q8,14.8 0.1,5.2Z"/><circle cx="8" cy="5.2" r="2.75" fill="none" stroke="#4e4e4e" stroke-width="1.35"/><circle cx="7.3" cy="4.5" r=".8" fill="#e6e6e6"/></svg>
<div style="left:1936.8px;top:844.6px;width:4.4px;height:23.6px;background:#4f4ff6;border-radius:1px"></div>
<svg style="left:2031.2px;top:845.20px;border:1.3px solid #000;box-sizing:border-box" width="22.2" height="22.2" viewBox="0 0 20 20" preserveAspectRatio="none"><rect width="20" height="20" fill="#fff"/><path d="M0,0 H20 V20 H14 A15,19 0 0 1 0,0Z" fill="#76fb4c"/></svg>
<span style="left:2060.60px;top:850.74px;font-size:12px;line-height:12px;color:#e8e8e8;letter-spacing:0.265px;">&lt;Rectangle&gt;</span>
<svg style="left:2186px;top:849.7px;" width="13" height="13" viewBox="0 0 13 13"><circle cx="6.5" cy="6.5" r="4.6" fill="none" stroke="#d2d2d2" stroke-width="1.35"/></svg>
<svg style="left:1888.6px;top:876.9px;" width="15.7" height="10.6" viewBox="0 0 16 10.4"><path fill="#c9c9c9" d="M0.1,5.2 Q8,-4.4 15.9,5.2 Q8,14.8 0.1,5.2Z"/><circle cx="8" cy="5.2" r="2.75" fill="none" stroke="#4e4e4e" stroke-width="1.35"/><circle cx="7.3" cy="4.5" r=".8" fill="#e6e6e6"/></svg>
<div style="left:1936.8px;top:870.6px;width:4.4px;height:24.6px;background:#4f4ff6;border-radius:1px"></div>
<svg style="left:2031.2px;top:871.20px;border:1.3px solid #000;box-sizing:border-box" width="22.2" height="22.2" viewBox="0 0 20 20" preserveAspectRatio="none"><rect width="20" height="20" fill="#fff"/><path d="M0,0 H8 A14,19 0 0 1 20,20 H0Z" fill="#76fb4c"/></svg>
<span style="left:2060.60px;top:877.24px;font-size:12px;line-height:12px;color:#e8e8e8;letter-spacing:0.265px;">&lt;Rectangle&gt;</span>
<svg style="left:2186px;top:876.2px;" width="13" height="13" viewBox="0 0 13 13"><circle cx="6.5" cy="6.5" r="4.6" fill="none" stroke="#d2d2d2" stroke-width="1.35"/></svg>
<svg style="left:1888.6px;top:903.4px;" width="15.7" height="10.6" viewBox="0 0 16 10.4"><path fill="#c9c9c9" d="M0.1,5.2 Q8,-4.4 15.9,5.2 Q8,14.8 0.1,5.2Z"/><circle cx="8" cy="5.2" r="2.75" fill="none" stroke="#4e4e4e" stroke-width="1.35"/><circle cx="7.3" cy="4.5" r=".8" fill="#e6e6e6"/></svg>
<div style="left:1936.8px;top:897.6px;width:4.4px;height:23.6px;background:#4f4ff6;border-radius:1px"></div>
<svg style="left:2031.2px;top:898.20px;border:1.3px solid #000;box-sizing:border-box" width="22.2" height="22.2" viewBox="0 0 20 20" preserveAspectRatio="none"><rect width="20" height="20" fill="#fff"/><path d="M0,20 A20,19 0 0 1 20,0.5 V20Z" fill="#76fb4c"/></svg>
<span style="left:2060.60px;top:903.74px;font-size:12px;line-height:12px;color:#e8e8e8;letter-spacing:0.265px;">&lt;Rectangle&gt;</span>
<svg style="left:2186px;top:902.7px;" width="13" height="13" viewBox="0 0 13 13"><circle cx="6.5" cy="6.5" r="4.6" fill="none" stroke="#d2d2d2" stroke-width="1.35"/></svg>
<svg style="left:1888.6px;top:929.4px;" width="15.7" height="10.6" viewBox="0 0 16 10.4"><path fill="#c9c9c9" d="M0.1,5.2 Q8,-4.4 15.9,5.2 Q8,14.8 0.1,5.2Z"/><circle cx="8" cy="5.2" r="2.75" fill="none" stroke="#4e4e4e" stroke-width="1.35"/><circle cx="7.3" cy="4.5" r=".8" fill="#e6e6e6"/></svg>
<div style="left:1936.8px;top:923.6px;width:4.4px;height:23.6px;background:#4f4ff6;border-radius:1px"></div>
<svg style="left:1978.8px;top:929.0px;" width="9" height="12" viewBox="0 0 9 12"><path d="M2,1.5 L6.5,6 L2,10.5" stroke="#e4e4e4" stroke-width="1.6" fill="none"/></svg>
<svg style="left:2003.1px;top:924.20px;border:1.3px solid #000;box-sizing:border-box" width="22.2" height="22.2" viewBox="0 0 20 20" preserveAspectRatio="none"><rect width="20" height="20" fill="#fff"/><path fill="#76fb4c" d="M9.5,9.5 H0 A9.5,9.5 0 0 1 9.5,0Z M10.5,9.5 V0 A9.5,9.5 0 0 1 20,9.5Z M9.5,10.5 V20 A9.5,9.5 0 0 1 0,10.5Z M20,20 H10.5 A9.5,9.5 0 0 1 20,10.5Z"/></svg>
<span style="left:2032.00px;top:929.74px;font-size:12px;line-height:12px;color:#e8e8e8;letter-spacing:0.472px;">&lt;Group&gt;</span>
<svg style="left:2186px;top:928.7px;" width="13" height="13" viewBox="0 0 13 13"><circle cx="6.5" cy="6.5" r="4.6" fill="none" stroke="#d2d2d2" stroke-width="1.35"/></svg>
<div style="left:1936.8px;top:949.6px;width:4.4px;height:23.6px;background:#4f4ff6;border-radius:1px"></div>
<svg style="left:2003.1px;top:950.20px;border:1.3px solid #000;box-sizing:border-box" width="22.2" height="22.2" viewBox="0 0 20 20" preserveAspectRatio="none"><rect width="20" height="20" fill="#fff"/></svg>
<span style="left:2032.00px;top:955.74px;font-size:12px;line-height:12px;color:#e8e8e8;letter-spacing:0.360px;">&lt;Guide&gt;</span>
<svg style="left:2186px;top:954.7px;" width="13" height="13" viewBox="0 0 13 13"><circle cx="6.5" cy="6.5" r="4.6" fill="none" stroke="#d2d2d2" stroke-width="1.35"/></svg>
<div style="left:1936.8px;top:975.6px;width:4.4px;height:24.6px;background:#4f4ff6;border-radius:1px"></div>
<svg style="left:2003.1px;top:976.20px;border:1.3px solid #000;box-sizing:border-box" width="22.2" height="22.2" viewBox="0 0 20 20" preserveAspectRatio="none"><rect width="20" height="20" fill="#fff"/></svg>
<span style="left:2032.00px;top:982.24px;font-size:12px;line-height:12px;color:#e8e8e8;letter-spacing:0.360px;">&lt;Guide&gt;</span>
<svg style="left:2186px;top:981.2px;" width="13" height="13" viewBox="0 0 13 13"><circle cx="6.5" cy="6.5" r="4.6" fill="none" stroke="#d2d2d2" stroke-width="1.35"/></svg>
<svg style="left:1888.6px;top:1008.4px;" width="15.7" height="10.6" viewBox="0 0 16 10.4"><path fill="#c9c9c9" d="M0.1,5.2 Q8,-4.4 15.9,5.2 Q8,14.8 0.1,5.2Z"/><circle cx="8" cy="5.2" r="2.75" fill="none" stroke="#4e4e4e" stroke-width="1.35"/><circle cx="7.3" cy="4.5" r=".8" fill="#e6e6e6"/></svg>
<div style="left:1936.8px;top:1002.6px;width:4.4px;height:23.6px;background:#4f4ff6;border-radius:1px"></div>
<svg style="left:2003.1px;top:1003.20px;border:1.3px solid #000;box-sizing:border-box" width="22.2" height="22.2" viewBox="0 0 20 20" preserveAspectRatio="none"><rect width="20" height="20" fill="#fff"/><path d="M10,0.5 L19.5,10 L10,19.5 L0.5,10Z" fill="#76fb4c"/></svg>
<span style="left:2032.00px;top:1008.74px;font-size:12px;line-height:12px;color:#e8e8e8;letter-spacing:0.265px;">&lt;Rectangle&gt;</span>
<svg style="left:2186px;top:1007.7px;" width="13" height="13" viewBox="0 0 13 13"><circle cx="6.5" cy="6.5" r="4.6" fill="none" stroke="#d2d2d2" stroke-width="1.35"/></svg>
<div style="left:1936.8px;top:1028.6px;width:4.4px;height:23.6px;background:#4f4ff6;border-radius:1px"></div>
<svg style="left:2003.1px;top:1029.20px;border:1.3px solid #000;box-sizing:border-box" width="22.2" height="22.2" viewBox="0 0 20 20" preserveAspectRatio="none"><rect width="20" height="20" fill="#fff"/></svg>
<span style="left:2032.00px;top:1034.74px;font-size:12px;line-height:12px;color:#e8e8e8;letter-spacing:0.360px;">&lt;Guide&gt;</span>
<svg style="left:2186px;top:1033.7px;" width="13" height="13" viewBox="0 0 13 13"><circle cx="6.5" cy="6.5" r="4.6" fill="none" stroke="#d2d2d2" stroke-width="1.35"/></svg>
<div style="left:1936.8px;top:1054.6px;width:4.4px;height:23.6px;background:#4f4ff6;border-radius:1px"></div>
<svg style="left:2003.1px;top:1055.20px;border:1.3px solid #000;box-sizing:border-box" width="22.2" height="22.2" viewBox="0 0 20 20" preserveAspectRatio="none"><rect width="20" height="20" fill="#fff"/></svg>
<span style="left:2032.00px;top:1060.74px;font-size:12px;line-height:12px;color:#e8e8e8;letter-spacing:0.360px;">&lt;Guide&gt;</span>
<svg style="left:2186px;top:1059.7px;" width="13" height="13" viewBox="0 0 13 13"><circle cx="6.5" cy="6.5" r="4.6" fill="none" stroke="#d2d2d2" stroke-width="1.35"/></svg>
<div style="left:1936.8px;top:1080.6px;width:4.4px;height:24.6px;background:#4f4ff6;border-radius:1px"></div>
<svg style="left:2003.1px;top:1081.20px;border:1.3px solid #000;box-sizing:border-box" width="22.2" height="22.2" viewBox="0 0 20 20" preserveAspectRatio="none"><rect width="20" height="20" fill="#fff"/></svg>
<span style="left:2032.00px;top:1087.24px;font-size:12px;line-height:12px;color:#e8e8e8;letter-spacing:0.360px;">&lt;Guide&gt;</span>
<svg style="left:2186px;top:1086.2px;" width="13" height="13" viewBox="0 0 13 13"><circle cx="6.5" cy="6.5" r="4.6" fill="none" stroke="#d2d2d2" stroke-width="1.35"/></svg>
<div style="left:1936.8px;top:1107.6px;width:4.4px;height:23.6px;background:#4f4ff6;border-radius:1px"></div>
<svg style="left:2003.1px;top:1108.20px;border:1.3px solid #000;box-sizing:border-box" width="22.2" height="22.2" viewBox="0 0 20 20" preserveAspectRatio="none"><rect width="20" height="20" fill="#fff"/></svg>
<span style="left:2032.00px;top:1113.74px;font-size:12px;line-height:12px;color:#e8e8e8;letter-spacing:0.360px;">&lt;Guide&gt;</span>
<svg style="left:2186px;top:1112.7px;" width="13" height="13" viewBox="0 0 13 13"><circle cx="6.5" cy="6.5" r="4.6" fill="none" stroke="#d2d2d2" stroke-width="1.35"/></svg>
<div style="left:1936.8px;top:1133.6px;width:4.4px;height:23.6px;background:#4f4ff6;border-radius:1px"></div>
<svg style="left:2003.1px;top:1134.20px;border:1.3px solid #000;box-sizing:border-box" width="22.2" height="22.2" viewBox="0 0 20 20" preserveAspectRatio="none"><rect width="20" height="20" fill="#fff"/></svg>
<span style="left:2032.00px;top:1139.74px;font-size:12px;line-height:12px;color:#e8e8e8;letter-spacing:0.360px;">&lt;Guide&gt;</span>
<svg style="left:2186px;top:1138.7px;" width="13" height="13" viewBox="0 0 13 13"><circle cx="6.5" cy="6.5" r="4.6" fill="none" stroke="#d2d2d2" stroke-width="1.35"/></svg>
<div style="left:1936.8px;top:1159.6px;width:4.4px;height:23.6px;background:#4f4ff6;border-radius:1px"></div>
<svg style="left:2003.1px;top:1160.20px;border:1.3px solid #000;box-sizing:border-box" width="22.2" height="22.2" viewBox="0 0 20 20" preserveAspectRatio="none"><rect width="20" height="20" fill="#fff"/></svg>
<span style="left:2032.00px;top:1165.74px;font-size:12px;line-height:12px;color:#e8e8e8;letter-spacing:0.360px;">&lt;Guide&gt;</span>
<svg style="left:2186px;top:1164.7px;" width="13" height="13" viewBox="0 0 13 13"><circle cx="6.5" cy="6.5" r="4.6" fill="none" stroke="#d2d2d2" stroke-width="1.35"/></svg>
<svg style="left:1888.6px;top:1191.9px;" width="15.7" height="10.6" viewBox="0 0 16 10.4"><path fill="#c9c9c9" d="M0.1,5.2 Q8,-4.4 15.9,5.2 Q8,14.8 0.1,5.2Z"/><circle cx="8" cy="5.2" r="2.75" fill="none" stroke="#4e4e4e" stroke-width="1.35"/><circle cx="7.3" cy="4.5" r=".8" fill="#e6e6e6"/></svg>
<div style="left:1936.8px;top:1185.6px;width:4.4px;height:24.6px;background:#4f4ff6;border-radius:1px"></div>
<svg style="left:1978.8px;top:1191.5px;" width="9" height="12" viewBox="0 0 9 12"><path d="M2,1.5 L6.5,6 L2,10.5" stroke="#e4e4e4" stroke-width="1.6" fill="none"/></svg>
<svg style="left:2003.1px;top:1186.20px;border:1.3px solid #000;box-sizing:border-box" width="22.2" height="22.2" viewBox="0 0 20 20" preserveAspectRatio="none"><rect width="20" height="20" fill="#fff"/><circle cx="10" cy="10" r="9.8" fill="#76fb4c"/><path d="M3,3 L17,17 M17,3 L3,17" stroke="#a8fd8a" stroke-width=".8"/></svg>
<span style="left:2032.00px;top:1192.24px;font-size:12px;line-height:12px;color:#e8e8e8;letter-spacing:0.472px;">&lt;Group&gt;</span>
<svg style="left:2186px;top:1191.2px;" width="13" height="13" viewBox="0 0 13 13"><circle cx="6.5" cy="6.5" r="4.6" fill="none" stroke="#d2d2d2" stroke-width="1.35"/></svg>
<svg style="left:1888.6px;top:1218.4px;" width="15.7" height="10.6" viewBox="0 0 16 10.4"><path fill="#c9c9c9" d="M0.1,5.2 Q8,-4.4 15.9,5.2 Q8,14.8 0.1,5.2Z"/><circle cx="8" cy="5.2" r="2.75" fill="none" stroke="#4e4e4e" stroke-width="1.35"/><circle cx="7.3" cy="4.5" r=".8" fill="#e6e6e6"/></svg>
<div style="left:1936.8px;top:1212.6px;width:4.4px;height:23.6px;background:#f05050;border-radius:1px"></div>
<svg style="left:1950.6px;top:1219.5px;" width="12" height="9" viewBox="0 0 12 9"><path d="M1.5,1.8 L6,6.3 L10.5,1.8" stroke="#e4e4e4" stroke-width="1.6" fill="none"/></svg>
<svg style="left:1974.0px;top:1213.20px;border:1.3px solid #000;box-sizing:border-box" width="22.2" height="22.2" viewBox="0 0 20 20" preserveAspectRatio="none"><rect width="20" height="20" fill="#fff"/><g opacity=".85"><rect x="2" y="1" width="2" height="2" fill="#dcc45c"/><rect x="5" y="1" width="2" height="2" fill="#2a5b37"/><rect x="8" y="1" width="1.5" height="6" fill="#b04844"/><rect x="3" y="4" width="3" height="2" fill="#dcc45c"/><rect x="5" y="3" width="2" height="3" fill="#b04844"/><rect x="10" y="10" width="2" height="2" fill="#2a5b37"/><rect x="12" y="11" width="3" height="2" fill="#dcc45c"/><rect x="16" y="10" width="1.5" height="7" fill="#b04844"/><rect x="12" y="13" width="2" height="3" fill="#b04844"/><rect x="11" y="16" width="6" height="1.5" fill="#dcc45c"/></g></svg>
<span style="left:2002.60px;top:1218.74px;font-size:12px;line-height:12px;color:#e8e8e8;letter-spacing:0.096px;">Layer 2</span>
<svg style="left:2186px;top:1217.7px;" width="13" height="13" viewBox="0 0 13 13"><circle cx="6.5" cy="6.5" r="4.6" fill="none" stroke="#d2d2d2" stroke-width="1.35"/></svg>
<svg style="left:1888.6px;top:1244.4px;" width="15.7" height="10.6" viewBox="0 0 16 10.4"><path fill="#c9c9c9" d="M0.1,5.2 Q8,-4.4 15.9,5.2 Q8,14.8 0.1,5.2Z"/><circle cx="8" cy="5.2" r="2.75" fill="none" stroke="#4e4e4e" stroke-width="1.35"/><circle cx="7.3" cy="4.5" r=".8" fill="#e6e6e6"/></svg>
<div style="left:1936.8px;top:1238.6px;width:4.4px;height:23.6px;background:#f05050;border-radius:1px"></div>
<svg style="left:2003.1px;top:1239.20px;border:1.3px solid #000;box-sizing:border-box" width="22.2" height="22.2" viewBox="0 0 20 20" preserveAspectRatio="none"><rect width="20" height="20" fill="#e8d9a0"/><rect x="2.5" y="2.5" width="7.3" height="7.3" fill="#2a5b37"/><rect x="10.3" y="2.5" width="7.3" height="7.3" fill="#c07340"/><rect x="2.5" y="10.3" width="7.3" height="7.3" fill="#dcc45c"/><rect x="10.3" y="10.3" width="7.3" height="7.3" fill="#b04844"/><circle cx="9.6" cy="10" r="4.3" fill="none" stroke="#fff" stroke-width="2.6"/><rect x="10" y="12" width="5" height="2.6" fill="#fff"/><path d="M0,0 H20 V20 H0Z" fill="none" stroke="#b4513c" stroke-width="2.4" stroke-dasharray="1.2 1.2"/></svg>
<span style="left:2032.00px;top:1244.74px;font-size:12px;line-height:12px;color:#e8e8e8;letter-spacing:0.772px;">&lt;Image&gt;</span>
<svg style="left:2186px;top:1243.7px;" width="13" height="13" viewBox="0 0 13 13"><circle cx="6.5" cy="6.5" r="4.6" fill="none" stroke="#d2d2d2" stroke-width="1.35"/></svg>
<div style="left:1936.8px;top:1264.6px;width:4.4px;height:23.6px;background:#f05050;border-radius:1px"></div>
<svg style="left:2003.1px;top:1265.20px;border:1.3px solid #000;box-sizing:border-box" width="22.2" height="22.2" viewBox="0 0 20 20" preserveAspectRatio="none"><rect width="20" height="20" fill="#fff"/></svg>
<span style="left:2032.00px;top:1270.74px;font-size:12px;line-height:12px;color:#e8e8e8;letter-spacing:0.360px;">&lt;Guide&gt;</span>
<svg style="left:2186px;top:1269.7px;" width="13" height="13" viewBox="0 0 13 13"><circle cx="6.5" cy="6.5" r="4.6" fill="none" stroke="#d2d2d2" stroke-width="1.35"/></svg>
<svg style="left:1888.6px;top:1296.9px;" width="15.7" height="10.6" viewBox="0 0 16 10.4"><path fill="#c9c9c9" d="M0.1,5.2 Q8,-4.4 15.9,5.2 Q8,14.8 0.1,5.2Z"/><circle cx="8" cy="5.2" r="2.75" fill="none" stroke="#4e4e4e" stroke-width="1.35"/><circle cx="7.3" cy="4.5" r=".8" fill="#e6e6e6"/></svg>
<div style="left:1936.8px;top:1290.6px;width:4.4px;height:24.6px;background:#f05050;border-radius:1px"></div>
<svg style="left:2003.1px;top:1291.20px;border:1.3px solid #000;box-sizing:border-box" width="22.2" height="22.2" viewBox="0 0 20 20" preserveAspectRatio="none"><rect width="20" height="20" fill="#e8d9a0"/><rect x="2.5" y="2.5" width="7.3" height="7.3" fill="#2a5b37"/><rect x="10.3" y="2.5" width="7.3" height="7.3" fill="#c07340"/><rect x="2.5" y="10.3" width="7.3" height="7.3" fill="#dcc45c"/><rect x="10.3" y="10.3" width="7.3" height="7.3" fill="#b04844"/><circle cx="9.6" cy="10" r="4.3" fill="none" stroke="#fff" stroke-width="2.6"/><rect x="10" y="12" width="5" height="2.6" fill="#fff"/><path d="M0,0 H20 V20 H0Z" fill="none" stroke="#b4513c" stroke-width="2.4" stroke-dasharray="1.2 1.2"/></svg>
<span style="left:2032.00px;top:1297.24px;font-size:12px;line-height:12px;color:#e8e8e8;letter-spacing:0.772px;">&lt;Image&gt;</span>
<svg style="left:2186px;top:1296.2px;" width="13" height="13" viewBox="0 0 13 13"><circle cx="6.5" cy="6.5" r="4.6" fill="none" stroke="#d2d2d2" stroke-width="1.35"/></svg>
<svg style="left:1888.6px;top:1323.4px;" width="15.7" height="10.6" viewBox="0 0 16 10.4"><path fill="#c9c9c9" d="M0.1,5.2 Q8,-4.4 15.9,5.2 Q8,14.8 0.1,5.2Z"/><circle cx="8" cy="5.2" r="2.75" fill="none" stroke="#4e4e4e" stroke-width="1.35"/><circle cx="7.3" cy="4.5" r=".8" fill="#e6e6e6"/></svg>
<svg style="left:1917px;top:1322.0px;" width="12" height="14" viewBox="0 0 12 14"><path d="M3.2,6.5 V4.4 A2.8,2.8 0 0 1 8.8,4.4 V6.5" fill="none" stroke="#c8c8c8" stroke-width="1.5"/><rect x="1.2" y="6.3" width="9.6" height="6.6" rx="1" fill="#c8c8c8"/><rect x="5.4" y="8.2" width="1.2" height="2.6" fill="#535353"/></svg>
<div style="left:1936.8px;top:1317.6px;width:4.4px;height:23.6px;background:#4f80ff;border-radius:1px"></div>
<svg style="left:1974.0px;top:1318.20px;border:1.3px solid #000;box-sizing:border-box" width="22.2" height="22.2" viewBox="0 0 20 20" preserveAspectRatio="none"><rect width="20" height="20" fill="#fff"/></svg>
<span style="left:2002.60px;top:1323.74px;font-size:12px;line-height:12px;color:#e8e8e8;letter-spacing:-0.004px;">Layer 1</span>
<svg style="left:2186px;top:1322.7px;" width="13" height="13" viewBox="0 0 13 13"><circle cx="6.5" cy="6.5" r="4.6" fill="none" stroke="#d2d2d2" stroke-width="1.35"/></svg>
<svg style="left:0;top:0;pointer-events:none" width="2568" height="1448" shape-rendering="crispEdges"><rect x="1884" y="187" width="339" height="1" fill="#5f5f5f"/><rect x="1884" y="213" width="339" height="1" fill="#5f5f5f"/><rect x="1884" y="239" width="339" height="1" fill="#5f5f5f"/><rect x="1884" y="266" width="339" height="1" fill="#5f5f5f"/><rect x="1884" y="292" width="339" height="1" fill="#5f5f5f"/><rect x="1884" y="318" width="339" height="1" fill="#5f5f5f"/><rect x="1884" y="344" width="339" height="1" fill="#5f5f5f"/><rect x="1884" y="371" width="339" height="1" fill="#5f5f5f"/><rect x="1884" y="397" width="339" height="1" fill="#5f5f5f"/><rect x="1884" y="423" width="339" height="1" fill="#5f5f5f"/><rect x="1884" y="449" width="339" height="1" fill="#5f5f5f"/><rect x="1884" y="476" width="339" height="1" fill="#5f5f5f"/><rect x="1884" y="502" width="339" height="1" fill="#5f5f5f"/><rect x="1884" y="528" width="339" height="1" fill="#5f5f5f"/><rect x="1884" y="554" width="339" height="1" fill="#5f5f5f"/><rect x="1884" y="581" width="339" height="1" fill="#5f5f5f"/><rect x="1884" y="607" width="339" height="1" fill="#5f5f5f"/><rect x="1884" y="633" width="339" height="1" fill="#5f5f5f"/><rect x="1884" y="659" width="339" height="1" fill="#5f5f5f"/><rect x="1884" y="686" width="339" height="1" fill="#5f5f5f"/><rect x="1884" y="712" width="339" height="1" fill="#5f5f5f"/><rect x="1884" y="738" width="339" height="1" fill="#5f5f5f"/><rect x="1884" y="764" width="339" height="1" fill="#5f5f5f"/><rect x="1884" y="791" width="339" height="1" fill="#5f5f5f"/><rect x="1884" y="817" width="339" height="1" fill="#5f5f5f"/><rect x="1884" y="843" width="339" height="1" fill="#5f5f5f"/><rect x="1884" y="869" width="339" height="1" fill="#5f5f5f"/><rect x="1884" y="896" width="339" height="1" fill="#5f5f5f"/><rect x="1884" y="922" width="339" height="1" fill="#5f5f5f"/><rect x="1884" y="948" width="339" height="1" fill="#5f5f5f"/><rect x="1884" y="974" width="339" height="1" fill="#5f5f5f"/><rect x="1884" y="1001" width="339" height="1" fill="#5f5f5f"/><rect x="1884" y="1027" width="339" height="1" fill="#5f5f5f"/><rect x="1884" y="1053" width="339" height="1" fill="#5f5f5f"/><rect x="1884" y="1079" width="339" height="1" fill="#5f5f5f"/><rect x="1884" y="1106" width="339" height="1" fill="#5f5f5f"/><rect x="1884" y="1132" width="339" height="1" fill="#5f5f5f"/><rect x="1884" y="1158" width="339" height="1" fill="#5f5f5f"/><rect x="1884" y="1184" width="339" height="1" fill="#5f5f5f"/><rect x="1884" y="1211" width="339" height="1" fill="#5f5f5f"/><rect x="1884" y="1237" width="339" height="1" fill="#5f5f5f"/><rect x="1884" y="1263" width="339" height="1" fill="#5f5f5f"/><rect x="1884" y="1289" width="339" height="1" fill="#5f5f5f"/><rect x="1884" y="1316" width="339" height="1" fill="#5f5f5f"/><rect x="1884" y="1342" width="339" height="1" fill="#5f5f5f"/><rect x="1908" y="160.6" width="1" height="1181.2" fill="#5e5e5e"/><rect x="1935" y="160.6" width="1" height="1181.2" fill="#5a5a5a" opacity=".5"/><rect x="2179" y="160.6" width="1" height="1181.2" fill="#5e5e5e"/></svg>
<span style="left:1882.40px;top:1363.14px;font-size:12px;line-height:12px;color:#d6d6d6;letter-spacing:0.054px;">4 Layers</span>
<svg style="left:1989px;top:1360px;" width="20" height="20" viewBox="0 0 20 20"><rect x="2.6" y="3.4" width="11.2" height="11.6" fill="none" stroke="#c4c4c4" stroke-width="1.5"/><rect x="1" y="1.8" width="3" height="3" fill="#c4c4c4"/><rect x="12.2" y="1.8" width="3" height="3" fill="#c4c4c4"/><rect x="1" y="13.4" width="3" height="3" fill="#c4c4c4"/><path fill="#c4c4c4" d="M11,9.5 h7 v9 l-3.5,-2.6 l-3.5,2.6z"/></svg>
<svg style="left:2019px;top:1360px;" width="20" height="20" viewBox="0 0 20 20"><path d="M9,5 H2 V16.4 H13.4 V10" fill="none" stroke="#c4c4c4" stroke-width="1.5"/><path d="M7.6,10.8 L15.6,2.8 M10.2,2.2 H16.2 V8.2" fill="none" stroke="#c4c4c4" stroke-width="1.5"/></svg>
<svg style="left:2051px;top:1360px;" width="20" height="20" viewBox="0 0 20 20"><circle cx="7" cy="7" r="4.4" fill="none" stroke="#6d6d6d" stroke-width="1.5"/><path d="M10.2,10.4 L15.4,15.8" stroke="#6d6d6d" stroke-width="2"/></svg>
<svg style="left:2083px;top:1360px;" width="20" height="20" viewBox="0 0 20 20"><rect x="2" y="2.4" width="9.6" height="9.6" fill="#8c8c8c" stroke="#c4c4c4" stroke-width="1.5"/><rect x="6.6" y="7" width="9.6" height="9.6" fill="none" stroke="#808080" stroke-width="1.4"/></svg>
<svg style="left:2113px;top:1360px;" width="23" height="20" viewBox="0 0 23 20"><path d="M2,2 V7 H8" fill="none" stroke="#c4c4c4" stroke-width="1.5"/><path fill="#c4c4c4" d="M6.2,3.6 l4,3.4 l-4,3.4z"/><rect x="9.6" y="4" width="11" height="11.4" fill="none" stroke="#c4c4c4" stroke-width="1.5"/><path d="M15.1,6.6 V12.8 M12,9.7 H18.2" stroke="#c4c4c4" stroke-width="1.5"/></svg>
<svg style="left:2149px;top:1360px;" width="20" height="20" viewBox="0 0 20 20"><rect x="2.6" y="3.4" width="12.6" height="12.6" fill="none" stroke="#c4c4c4" stroke-width="1.5"/><path d="M8.9,6.4 V13 M5.6,9.7 H12.2" stroke="#c4c4c4" stroke-width="1.5"/></svg>
<svg style="left:2181px;top:1360px;" width="20" height="20" viewBox="0 0 20 20"><path d="M2,4.6 H15.6 M6.2,4.2 V2.4 H11.4 V4.2" fill="none" stroke="#c4c4c4" stroke-width="1.5"/><path d="M3.4,5 L4.2,16.4 H13.4 L14.2,5" fill="none" stroke="#c4c4c4" stroke-width="1.5"/><path d="M6.8,7.2 V14 M8.8,7.2 V14 M10.8,7.2 V14" stroke="#c4c4c4" stroke-width="1.1"/></svg>
<div style="left:1875.6px;top:1382.6px;width:356.5999999999999px;height:1.2px;background:#363636;"></div>
<div style="left:1875.6px;top:1383.8px;width:356.5999999999999px;height:8.6px;background:#4d4d4d;"></div>
<div style="left:1875.6px;top:1392.2px;width:356.5999999999999px;height:1px;background:#383838;"></div>
<div style="left:1875.6px;top:58.7px;width:1px;height:1334px;background:#3c3c3c;"></div>
<div style="left:2231.2px;top:58.7px;width:1.2px;height:1334px;background:#3c3c3c;"></div>
<svg style="left:2041px;top:1385.6px;" width="26" height="5" viewBox="0 0 26 5"><rect x="0" y="0" width="1" height="5" fill="#2e2e2e"/><rect x="3" y="0" width="1" height="5" fill="#2e2e2e"/><rect x="6" y="0" width="1" height="5" fill="#2e2e2e"/><rect x="9" y="0" width="1" height="5" fill="#2e2e2e"/><rect x="12" y="0" width="1" height="5" fill="#2e2e2e"/><rect x="15" y="0" width="1" height="5" fill="#2e2e2e"/><rect x="18" y="0" width="1" height="5" fill="#2e2e2e"/><rect x="21" y="0" width="1" height="5" fill="#2e2e2e"/><rect x="24" y="0" width="1" height="5" fill="#2e2e2e"/></svg>
<span style="left:2258.40px;top:112.69px;font-size:12.3px;line-height:12.3px;color:#d6d6d6;letter-spacing:-0.085px;">No Selection</span>
<div style="left:2246px;top:137px;width:298.5px;height:1px;background:#474747;"></div>
<span style="left:2258.40px;top:155.49px;font-size:12.3px;line-height:12.3px;color:#d6d6d6;letter-spacing:0.077px;">Document</span>
<span style="left:2313.70px;top:190.29px;font-size:12.3px;line-height:12.3px;color:#d6d6d6;letter-spacing:0.052px;">Units:</span>
<div style="left:2352.9px;top:182px;width:145.5px;height:25px;background:#444;border:1px solid #686868;border-radius:3px;box-sizing:border-box"></div>
<span style="left:2361.20px;top:190.29px;font-size:12.3px;line-height:12.3px;color:#f0f0f0;letter-spacing:0.092px;">Inches</span>
<svg style="left:2481px;top:190px;" width="13" height="10" viewBox="0 0 13 10"><path d="M1.8,2 L6.4,6.6 L11,2" stroke="#e8e8e8" stroke-width="1.6" fill="none"/></svg>
<span style="left:2293.50px;top:225.89px;font-size:12.3px;line-height:12.3px;color:#d6d6d6;letter-spacing:0.163px;">Artboard:</span>
<div style="left:2352.9px;top:218.5px;width:92px;height:24.4px;background:#3f3f3f;border:1px solid #626262;border-radius:3px;box-sizing:border-box"></div>
<div style="left:2422px;top:219.5px;width:22px;height:22.4px;background:#4a4a4a;border-left:1px solid #626262;border-radius:0 2px 2px 0;box-sizing:border-box"></div>
<span style="left:2357.60px;top:225.29px;font-size:12.3px;line-height:12.3px;color:#f0f0f0;">1</span>
<svg style="left:2427px;top:226.5px;" width="13" height="10" viewBox="0 0 13 10"><path d="M1.8,2 L6.4,6.6 L11,2" stroke="#e8e8e8" stroke-width="1.6" fill="none"/></svg>
<svg style="left:2462px;top:226px;" width="8" height="13" viewBox="0 0 8 13"><path d="M7,1 V12 L1,6.5Z" fill="#6e6e6e"/></svg>
<svg style="left:2488px;top:226px;" width="8" height="13" viewBox="0 0 8 13"><path d="M1,1 V12 L7,6.5Z" fill="#6e6e6e"/></svg>
<div style="left:2352.9px;top:254.4px;width:142.79999999999973px;height:24.99999999999997px;background:#535353;border:1px solid #6c6c6c;border-radius:3px;box-sizing:border-box"></div>
<span style="left:2385.20px;top:262.59px;font-size:12.3px;line-height:12.3px;color:#ececec;letter-spacing:0.072px;">Edit Artboards</span>
<div style="left:2246px;top:297.5px;width:298.5px;height:1px;background:#474747;"></div>
<span style="left:2258.40px;top:316.49px;font-size:12.3px;line-height:12.3px;color:#d6d6d6;letter-spacing:-0.051px;">Ruler &amp; Grids</span>
<div style="left:2366.2px;top:308.2px;width:26.6px;height:26.4px;background:#2d2d2d;border-radius:3px"></div>
<svg style="left:2366.2px;top:308.2px;" width="26.6" height="26.4" viewBox="0 0 26 26"><path d="M4,4.3 H23 V9.6 H9.6 V23.4 H4Z" fill="#ececec"/><path d="M6.8,11.6 v1.3 M6.8,14.6 v1.3 M6.8,17.6 v1.3 M6.8,20.6 v1.3 M11.6,7 h1.3 M14.6,7 h1.3 M17.6,7 h1.3 M20.6,7 h1.3" stroke="#2d2d2d" stroke-width="1.3"/></svg>
<svg style="left:2404.5px;top:308.2px;" width="26.6" height="26.4" viewBox="0 0 26 26"><path d="M3.4,4.4 H22.6 V23.6 H3.4Z M9.8,4.4 V23.6 M16.2,4.4 V23.6 M3.4,10.8 H22.6 M3.4,17.2 H22.6" fill="none" stroke="#c2c2c2" stroke-width="1.6"/></svg>
<svg style="left:2442.3px;top:308.2px;" width="26.6" height="26.4" viewBox="0 0 26 26"><rect x="4.00" y="4.60" width="3.84" height="3.84" fill="#787878"/><rect x="4.00" y="8.44" width="3.84" height="3.84" fill="#9c9c9c"/><rect x="4.00" y="12.28" width="3.84" height="3.84" fill="#787878"/><rect x="4.00" y="16.12" width="3.84" height="3.84" fill="#9c9c9c"/><rect x="4.00" y="19.96" width="3.84" height="3.84" fill="#787878"/><rect x="7.84" y="4.60" width="3.84" height="3.84" fill="#9c9c9c"/><rect x="7.84" y="8.44" width="3.84" height="3.84" fill="#787878"/><rect x="7.84" y="12.28" width="3.84" height="3.84" fill="#9c9c9c"/><rect x="7.84" y="16.12" width="3.84" height="3.84" fill="#787878"/><rect x="7.84" y="19.96" width="3.84" height="3.84" fill="#9c9c9c"/><rect x="11.68" y="4.60" width="3.84" height="3.84" fill="#787878"/><rect x="11.68" y="8.44" width="3.84" height="3.84" fill="#9c9c9c"/><rect x="11.68" y="12.28" width="3.84" height="3.84" fill="#787878"/><rect x="11.68" y="16.12" width="3.84" height="3.84" fill="#9c9c9c"/><rect x="11.68" y="19.96" width="3.84" height="3.84" fill="#787878"/><rect x="15.52" y="4.60" width="3.84" height="3.84" fill="#9c9c9c"/><rect x="15.52" y="8.44" width="3.84" height="3.84" fill="#787878"/><rect x="15.52" y="12.28" width="3.84" height="3.84" fill="#9c9c9c"/><rect x="15.52" y="16.12" width="3.84" height="3.84" fill="#787878"/><rect x="15.52" y="19.96" width="3.84" height="3.84" fill="#9c9c9c"/><rect x="19.36" y="4.60" width="3.84" height="3.84" fill="#787878"/><rect x="19.36" y="8.44" width="3.84" height="3.84" fill="#9c9c9c"/><rect x="19.36" y="12.28" width="3.84" height="3.84" fill="#787878"/><rect x="19.36" y="16.12" width="3.84" height="3.84" fill="#9c9c9c"/><rect x="19.36" y="19.96" width="3.84" height="3.84" fill="#787878"/><rect x="3.6" y="4.2" width="20" height="20" fill="none" stroke="#a8a8a8" stroke-width="1.2"/></svg>
<div style="left:2246px;top:345px;width:298.5px;height:1px;background:#474747;"></div>
<span style="left:2258.40px;top:363.39px;font-size:12.3px;line-height:12.3px;color:#d6d6d6;letter-spacing:-0.334px;">Guides</span>
<div style="left:2366.2px;top:355.2px;width:26.6px;height:26.4px;background:#2d2d2d;border-radius:3px"></div>
<svg style="left:2366.2px;top:355.2px;" width="26.6" height="26.4" viewBox="0 0 26 26"><path d="M8.8,3.5 V24.9 M12.1,3.5 V24.9 M3.7,11.4 H24.7 M3.7,19.8 H24.7" stroke="#f4f4f4" stroke-width="1.5" fill="none"/></svg>
<svg style="left:2404.5px;top:355.2px;" width="26.6" height="26.4" viewBox="0 0 26 26"><path d="M7.4,3.5 V24.9 M10.6,3.5 V24.9 M2.7,11.4 H23.2 M2.7,19.8 H14.6" stroke="#bdbdbd" stroke-width="1.4" fill="none"/><rect x="15.7" y="19.4" width="8.9" height="6" fill="#c6c6c6"/><path d="M17.4,19.4 V17.4 a2.7,2.7 0 0 1 5.2,-1" stroke="#c6c6c6" stroke-width="1.5" fill="none"/></svg>
<div style="left:2441.4px;top:355.2px;width:26.6px;height:26.4px;background:#2d2d2d;border-radius:3px"></div>
<svg style="left:2441.4px;top:355.2px;" width="26.6" height="26.4" viewBox="0 0 26 26"><path d="M8.5,3.5 V24.9 M3.5,11.4 H24.5 M14.4,7.6 L10,11.4 L14.4,15.2" stroke="#f4f4f4" stroke-width="1.5" fill="none"/><path d="M22.6,14.2 L18,20.4 H21.2 L19.2,25.9 L25.4,18.6 H22Z" fill="#f4f4f4"/></svg>
<div style="left:2246px;top:392.3px;width:298.5px;height:1px;background:#474747;"></div>
<span style="left:2258.40px;top:411.69px;font-size:12.3px;line-height:12.3px;color:#d6d6d6;letter-spacing:-0.121px;">Snap Options</span>
<div style="left:2366.2px;top:403.2px;width:26.6px;height:26.4px;background:#2d2d2d;border-radius:3px"></div>
<svg style="left:2366.2px;top:403.2px;" width="26.6" height="26.4" viewBox="0 0 26 26"><path d="M7.2,5.4 V23.1" stroke="#f4f4f4" stroke-width="1.4"/><circle cx="7.2" cy="13.5" r="2" fill="#2d2d2d" stroke="#f4f4f4" stroke-width="1.3"/><path d="M13,10.8 h6 a3,3 0 0 1 0,6 h-6" stroke="#f4f4f4" stroke-width="3.2" fill="none"/><path d="M14.6,9.2 v3.2 M14.6,15.2 v3.2" stroke="#2d2d2d" stroke-width=".8"/></svg>
<svg style="left:2404.5px;top:403.2px;" width="26.6" height="26.4" viewBox="0 0 26 26"><rect x="2.7" y="4.00" width="1.9" height="2.2" fill="#bdbdbd"/><rect x="2.7" y="6.95" width="1.9" height="2.2" fill="#bdbdbd"/><rect x="2.7" y="9.90" width="1.9" height="2.2" fill="#bdbdbd"/><rect x="2.7" y="12.85" width="1.9" height="2.2" fill="#bdbdbd"/><rect x="2.7" y="15.80" width="1.9" height="2.2" fill="#bdbdbd"/><rect x="2.7" y="18.75" width="1.9" height="2.2" fill="#bdbdbd"/><rect x="2.7" y="21.70" width="1.9" height="2.2" fill="#bdbdbd"/><rect x="5.2" y="4.00" width="1.9" height="2.2" fill="#bdbdbd"/><rect x="5.2" y="6.95" width="1.9" height="2.2" fill="#bdbdbd"/><rect x="5.2" y="9.90" width="1.9" height="2.2" fill="#bdbdbd"/><rect x="5.2" y="12.85" width="1.9" height="2.2" fill="#bdbdbd"/><rect x="5.2" y="15.80" width="1.9" height="2.2" fill="#bdbdbd"/><rect x="5.2" y="18.75" width="1.9" height="2.2" fill="#bdbdbd"/><rect x="5.2" y="21.70" width="1.9" height="2.2" fill="#bdbdbd"/><rect x="7.7" y="4.00" width="1.9" height="2.2" fill="#bdbdbd"/><rect x="7.7" y="6.95" width="1.9" height="2.2" fill="#bdbdbd"/><rect x="7.7" y="9.90" width="1.9" height="2.2" fill="#bdbdbd"/><rect x="7.7" y="12.85" width="1.9" height="2.2" fill="#bdbdbd"/><rect x="7.7" y="15.80" width="1.9" height="2.2" fill="#bdbdbd"/><rect x="7.7" y="18.75" width="1.9" height="2.2" fill="#bdbdbd"/><rect x="7.7" y="21.70" width="1.9" height="2.2" fill="#bdbdbd"/><rect x="2.7" y="4" width="1" height="20.5" fill="#bdbdbd"/><rect x="9.2" y="4" width="1" height="20.5" fill="#bdbdbd"/><path d="M12,10.8 h6 a3,3 0 0 1 0,6 h-6" stroke="#bdbdbd" stroke-width="3.2" fill="none"/><path d="M13.6,9.2 v3.2 M13.6,15.2 v3.2" stroke="#535353" stroke-width=".8"/></svg>
<svg style="left:2442.3px;top:403.2px;" width="26.6" height="26.4" viewBox="0 0 26 26"><rect x="4" y="5.4" width="5.2" height="5.6" rx="1" fill="#bdbdbd"/><rect x="4" y="11.7" width="5.2" height="5.6" rx="1" fill="#bdbdbd"/><rect x="4" y="18.0" width="5.2" height="5.6" rx="1" fill="#bdbdbd"/><path d="M12,10.8 h6 a3,3 0 0 1 0,6 h-6" stroke="#bdbdbd" stroke-width="3.2" fill="none"/><path d="M13.6,9.2 v3.2 M13.6,15.2 v3.2" stroke="#535353" stroke-width=".8"/></svg>
<div style="left:2246px;top:440.3px;width:298.5px;height:1px;background:#474747;"></div>
<span style="left:2258.40px;top:455.59px;font-size:12.3px;line-height:12.3px;color:#d6d6d6;letter-spacing:-0.192px;">Preferences</span>
<span style="left:2256.80px;top:488.79px;font-size:12.3px;line-height:12.3px;color:#d6d6d6;letter-spacing:0.068px;">Keyboard Increment:</span>
<div style="left:2380px;top:481.6px;width:73.8px;height:24.6px;background:#3f3f3f;border:1px solid #5e5e5e;border-radius:3px;box-sizing:border-box"></div>
<span style="left:2386.60px;top:488.09px;font-size:12.3px;line-height:12.3px;color:#f0f0f0;letter-spacing:0.161px;">0.0139 in</span>
<div style="left:2262.3px;top:523.3px;width:14.2px;height:13.8px;background:transparent;border:1.3px solid #cfcfcf;border-radius:2.5px;box-sizing:border-box"></div>
<span style="left:2281.10px;top:524.69px;font-size:12.3px;line-height:12.3px;color:#d6d6d6;letter-spacing:-0.139px;">Use Preview Bounds</span>
<div style="left:2262.3px;top:553.4px;width:14.2px;height:13.8px;background:transparent;border:1.3px solid #cfcfcf;border-radius:2.5px;box-sizing:border-box"></div>
<span style="left:2281.10px;top:554.79px;font-size:12.3px;line-height:12.3px;color:#d6d6d6;letter-spacing:-0.236px;">Scale Corners</span>
<div style="left:2262.3px;top:583.4px;width:14.2px;height:13.8px;background:transparent;border:1.3px solid #cfcfcf;border-radius:2.5px;box-sizing:border-box"></div>
<span style="left:2281.10px;top:584.79px;font-size:12.3px;line-height:12.3px;color:#d6d6d6;letter-spacing:-0.082px;">Scale Strokes &amp; Effects</span>
<div style="left:2246px;top:617.6px;width:298.5px;height:1px;background:#474747;"></div>
<span style="left:2258.40px;top:640.69px;font-size:12.3px;line-height:12.3px;color:#d6d6d6;letter-spacing:-0.018px;">Quick Actions</span>
<div style="left:2258.4px;top:668.3px;width:145.0px;height:25.5px;background:#535353;border:1px solid #6c6c6c;border-radius:3px;box-sizing:border-box"></div>
<span style="left:2285.20px;top:677.09px;font-size:12.3px;line-height:12.3px;color:#ececec;letter-spacing:0.006px;">Document Setup</span>
<div style="left:2415.9px;top:668.3px;width:126.19999999999982px;height:25.5px;background:#535353;border:1px solid #6c6c6c;border-radius:3px;box-sizing:border-box"></div>
<span style="left:2447.30px;top:677.09px;font-size:12.3px;line-height:12.3px;color:#ececec;letter-spacing:-0.192px;">Preferences</span>
<div style="left:2258.4px;top:707px;width:283.6999999999998px;height:25.5px;background:#535353;border:1px solid #6c6c6c;border-radius:3px;box-sizing:border-box"></div>
<span style="left:2334.10px;top:715.79px;font-size:12.3px;line-height:12.3px;color:#ececec;letter-spacing:0.012px;">Generate Vectors (Beta)</span></body></html>
